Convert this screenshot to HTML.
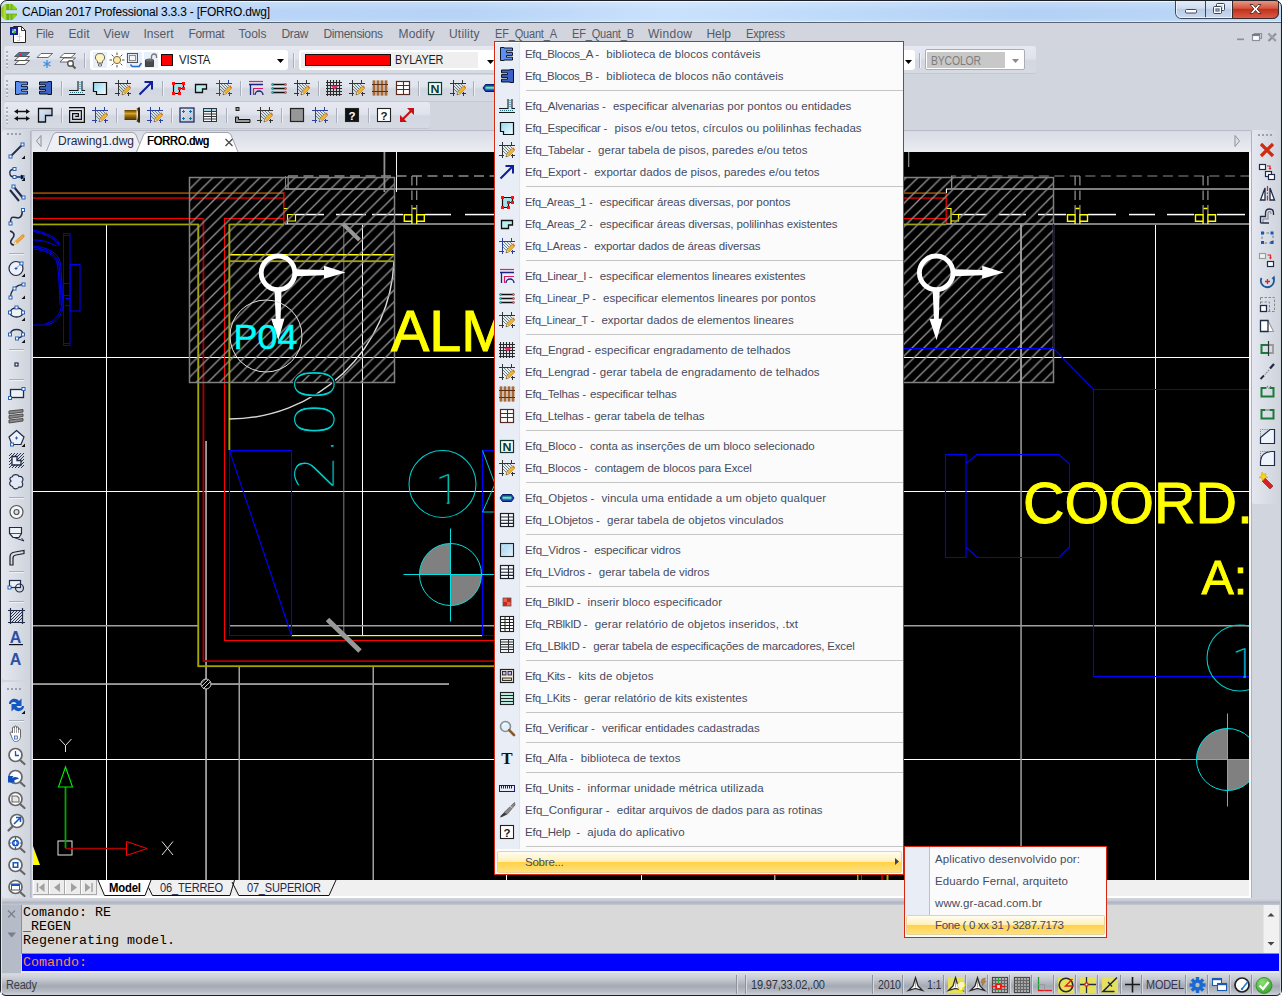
<!DOCTYPE html>
<html><head><meta charset="utf-8"><title>CADian 2017 Professional 3.3.3 - [FORRO.dwg]</title>
<style>
html,body{margin:0;padding:0;}
body{width:1282px;height:996px;overflow:hidden;position:relative;background:#d1d5dd;font-family:"Liberation Sans",sans-serif;font-size:12px;}
.t{position:absolute;white-space:pre;line-height:1;}
.a{position:absolute;}
.tb{position:absolute;border-radius:3px;background:linear-gradient(#e6e9f1,#dfe3ec 45%,#d3d7e1 55%,#d6dae3);box-shadow:0 1px 0 #c4c8d2;}
.sep{position:absolute;width:1px;background:#a9aebb;box-shadow:1px 0 0 #eef0f5;}
.hsep{position:absolute;height:1px;background:#a9aebb;box-shadow:0 1px 0 #eef0f5;}
.grip{position:absolute;width:2px;}
.mi{position:absolute;left:525px;white-space:pre;line-height:1;color:#4a4f5e;font-size:12px;}
.ms{position:absolute;left:526px;width:377px;height:1px;background:#c5c5c5;}
svg{position:absolute;overflow:visible;}
</style></head><body>

<div class="a" style="left:0;top:0;width:1282px;height:22px;background:linear-gradient(100deg,#c6ddf8 0%,#bad5f6 18%,#b6d3f6 36%,#c9e1fc 52%,#bfdbfa 64%,#b3d1f5 80%,#bdd8f8 100%);"></div>
<div class="a" style="left:0;top:0;width:1282px;height:22px;background:linear-gradient(rgba(255,255,255,.28),rgba(255,255,255,0) 45%,rgba(255,255,255,0) 80%,rgba(255,255,255,.15));"></div>
<div class="a" style="left:0;top:21px;width:1282px;height:1px;background:rgba(255,255,255,.45);"></div>
<div class="a" style="left:0;top:22px;width:1282px;height:1px;background:#566474;"></div>
<div class="a" style="left:0;top:1px;width:1282px;height:1px;background:rgba(255,255,255,.7);"></div>
<svg style="left:0px;top:0px;" width="18" height="22" viewBox="0 0 18 22" ><defs><linearGradient id="gapp" x1="0" y1="0" x2="1" y2="0"><stop offset="0" stop-color="#86c41a"/><stop offset=".14" stop-color="#98d226"/><stop offset=".24" stop-color="#c4e640"/><stop offset=".3" stop-color="#8cc81c"/><stop offset=".44" stop-color="#5aa414"/><stop offset=".54" stop-color="#a6da30"/><stop offset=".62" stop-color="#6cb418"/><stop offset=".8" stop-color="#94d41c"/><stop offset="1" stop-color="#7cc418"/></linearGradient></defs><path d="M5,3.900 H12.500 L17,8.400 V9.700 H6 V14 H17 V15.300 L12.500,20 H5 L1.250,16 V8 Z" fill="url(#gapp)"/><path d="M6,9.700 H17 M6,14 H17" stroke="#4e9410" stroke-width="0.800" opacity=".7"/></svg>
<span class="t" id="title" style="left:22px;top:5.8px;font-size:12.5px;color:#000;font-weight:normal;letter-spacing:-0.200px;transform:scaleX(0.958);transform-origin:0 0;">CADian 2017 Professional 3.3.3 - [FORRO.dwg]</span>
<svg style="left:1175px;top:0;" width="106" height="22" viewBox="0 0 106 22"><path d="M0.500,0 V12 Q0.500,18.500 7,18.500 H97 Q103.500,18.500 103.500,12 V0 Z" fill="url(#gbtn)" stroke="#3c4654" stroke-width="1"/><path d="M57.500,0 V18.500 H97 Q103.500,18.500 103.500,12 V0 Z" fill="url(#gred)" stroke="#3c2a2a" stroke-width="1"/><path d="M30.500,0 V18.500" stroke="#3c4654" stroke-width="1"/><path d="M1.500,0 V12 Q1.500,17.500 7,17.500 H56.500 V0" fill="none" stroke="#f4f8fd" stroke-width="1" opacity=".8"/><rect x="10.500" y="9.500" width="11" height="3.500" rx="1" fill="#fff" stroke="#3c4654" stroke-width="1"/><rect x="41.500" y="3.500" width="8" height="7" rx="1" fill="none" stroke="#3c4654" stroke-width="1"/><rect x="42.500" y="4.500" width="6" height="5" fill="none" stroke="#fff" stroke-width="1"/><rect x="38.500" y="6.500" width="8" height="7" rx="1" fill="#cfdcf0" stroke="#3c4654" stroke-width="1"/><rect x="39.500" y="7.500" width="6" height="5" fill="none" stroke="#fff" stroke-width="1"/><rect x="41" y="9" width="3" height="2" fill="#cfdcf0" stroke="#3c4654" stroke-width="0.8"/><path d="M75,4.500 L78,4.500 L80.500,7.500 L83,4.500 L86,4.500 L82.200,9 L86,13.500 L83,13.500 L80.500,10.500 L78,13.500 L75,13.500 L78.800,9 Z" fill="#fff" stroke="#4a2a2a" stroke-width="0.9"/></svg>
<div class="a" style="left:0;top:23px;width:1282px;height:22px;background:#d2d5dd;"></div>
<svg style="left:9px;top:25px;" width="18" height="19" viewBox="0 0 18 19" ><path d="M4.500,1.500 H12.500 L16.500,5.500 V17.500 H4.500 Z" fill="#fff" stroke="#222" stroke-width="1"/><path d="M12.500,1.500 V5.500 H16.500" fill="none" stroke="#222" stroke-width="0.900"/><rect x="1" y="2" width="8" height="8" fill="#1a1a9a"/><path d="M3,4 h4 v4 h-4 z" fill="#3aa0a0"/><path d="M3,7 h2 M6,4 v2" stroke="#fff" stroke-width="1"/><rect x="4.500" y="7" width="1.500" height="1.500" fill="#20c020"/><path d="M8,11.500 h5 M10.500,8 v8 M8,15.500 h3" stroke="#c8c8c8" stroke-width="0.800"/></svg>
<span class="t" id="m0" style="left:35.5px;top:28px;font-size:12px;color:#555a68;font-weight:normal;letter-spacing:-0.201px;transform:scaleX(0.9603);transform-origin:0 0;">File</span>
<span class="t" id="m1" style="left:68.5px;top:28px;font-size:12px;color:#555a68;font-weight:normal;letter-spacing:0.107px;">Edit</span>
<span class="t" id="m2" style="left:103.5px;top:28px;font-size:12px;color:#555a68;font-weight:normal;letter-spacing:0.065px;">View</span>
<span class="t" id="m3" style="left:143.5px;top:28px;font-size:12px;color:#555a68;font-weight:normal;letter-spacing:-0.004px;">Insert</span>
<span class="t" id="m4" style="left:188.5px;top:28px;font-size:12px;color:#555a68;font-weight:normal;letter-spacing:-0.402px;">Format</span>
<span class="t" id="m5" style="left:238.5px;top:28px;font-size:12px;color:#555a68;font-weight:normal;letter-spacing:-0.005px;">Tools</span>
<span class="t" id="m6" style="left:281.5px;top:28px;font-size:12px;color:#555a68;font-weight:normal;letter-spacing:-0.337px;">Draw</span>
<span class="t" id="m7" style="left:323.5px;top:28px;font-size:12px;color:#555a68;font-weight:normal;letter-spacing:-0.356px;">Dimensions</span>
<span class="t" id="m8" style="left:398.5px;top:28px;font-size:12px;color:#555a68;font-weight:normal;letter-spacing:0.129px;">Modify</span>
<span class="t" id="m9" style="left:449.0px;top:28px;font-size:12px;color:#555a68;font-weight:normal;letter-spacing:0.194px;">Utility</span>
<span class="t" id="m10" style="left:494.5px;top:28px;font-size:12px;color:#555a68;font-weight:normal;letter-spacing:-0.202px;transform:scaleX(0.9175);transform-origin:0 0;">EF_Quant_A</span>
<span class="t" id="m11" style="left:571.5px;top:28px;font-size:12px;color:#555a68;font-weight:normal;letter-spacing:-0.202px;transform:scaleX(0.9175);transform-origin:0 0;">EF_Quant_B</span>
<span class="t" id="m12" style="left:648.0px;top:28px;font-size:12px;color:#555a68;font-weight:normal;letter-spacing:0.262px;">Window</span>
<span class="t" id="m13" style="left:706.5px;top:28px;font-size:12px;color:#555a68;font-weight:normal;letter-spacing:-0.062px;">Help</span>
<span class="t" id="m14" style="left:745.5px;top:28px;font-size:12px;color:#555a68;font-weight:normal;letter-spacing:-0.199px;transform:scaleX(0.9251);transform-origin:0 0;">Express</span>
<svg style="left:1232px;top:24px;" width="50" height="24" viewBox="0 0 50 24" ><path d="M5,15.500 H12" stroke="#8a909c" stroke-width="2"/><path d="M5,16.800 H12" stroke="#fff" stroke-width="0.600" opacity=".7"/><rect x="20.500" y="11.500" width="7" height="5" fill="#fff" stroke="#8a909c" stroke-width="1.2"/><path d="M22.500,11.500 V9.500 H29.500 V14.500 H27.500" fill="none" stroke="#8a909c" stroke-width="1.200"/><path d="M20,10.800 H28" stroke="#6a707c" stroke-width="1.400"/><path d="M36.500,9.500 L44,17 M44,9.500 L36.500,17" stroke="#8a909c" stroke-width="2.200"/><path d="M37.300,9.800 L44.800,17.300" stroke="#fff" stroke-width="0.600" opacity=".6"/></svg>
<div class="tb" style="left:4px;top:46px;width:1032px;height:27px;"></div>
<div class="tb" style="left:4px;top:75px;width:640px;height:26px;"></div>
<div class="tb" style="left:4px;top:102px;width:426px;height:26px;"></div>
<div class="grip" style="left:6px;top:51px;height:17px;background:repeating-linear-gradient(#a9aebb 0,#a9aebb 2px,#eef0f5 2px,#eef0f5 3px,transparent 3px,transparent 4px);"></div>
<div class="grip" style="left:6px;top:80px;height:17px;background:repeating-linear-gradient(#a9aebb 0,#a9aebb 2px,#eef0f5 2px,#eef0f5 3px,transparent 3px,transparent 4px);"></div>
<div class="grip" style="left:6px;top:107px;height:17px;background:repeating-linear-gradient(#a9aebb 0,#a9aebb 2px,#eef0f5 2px,#eef0f5 3px,transparent 3px,transparent 4px);"></div>
<svg width="0" height="0" style="left:0;top:0"><defs><linearGradient id="gcy" x1="0" y1="0" x2="1" y2="1"><stop offset="0" stop-color="#8fd8f2"/><stop offset="1" stop-color="#f4fcff"/></linearGradient><linearGradient id="gbl" x1="0" y1="0" x2="1" y2="1"><stop offset="0" stop-color="#dfe9f6"/><stop offset="1" stop-color="#a9c0de"/></linearGradient><linearGradient id="ggold" x1="0" y1="0" x2="0" y2="1"><stop offset="0" stop-color="#5a3c00"/><stop offset=".35" stop-color="#d8a520"/><stop offset=".6" stop-color="#9a6c08"/><stop offset="1" stop-color="#4a3000"/></linearGradient><linearGradient id="gcap" x1="0" y1="0" x2="0" y2="1"><stop offset="0" stop-color="#0b6a6a"/><stop offset=".45" stop-color="#7ff0ee"/><stop offset="1" stop-color="#0a5a60"/></linearGradient><linearGradient id="gsq" x1="0" y1="0" x2="1" y2="1"><stop offset="0" stop-color="#9fd0ee"/><stop offset="1" stop-color="#e6f4fc"/></linearGradient><linearGradient id="ggr" x1="0" y1="0" x2="1" y2="1"><stop offset="0" stop-color="#e8ecf2"/><stop offset="1" stop-color="#b8c0cc"/></linearGradient><radialGradient id="gok" cx=".4" cy=".3" r=".8"><stop offset="0" stop-color="#8fe07a"/><stop offset="1" stop-color="#2f9a28"/></radialGradient><linearGradient id="gred" x1="0" y1="0" x2="0" y2="1"><stop offset="0" stop-color="#e9a090"/><stop offset=".45" stop-color="#d4553f"/><stop offset=".5" stop-color="#c2301a"/><stop offset="1" stop-color="#d9604a"/></linearGradient><linearGradient id="gbtn" x1="0" y1="0" x2="0" y2="1"><stop offset="0" stop-color="#e6eefa"/><stop offset=".45" stop-color="#cfdcf0"/><stop offset=".5" stop-color="#b9cbe6"/><stop offset="1" stop-color="#cbdaf0"/></linearGradient></defs></svg><svg style="left:14px;top:51px;" width="16" height="16" viewBox="0 0 16 16" ><path d="M5,1.500 H15.500 L11,5.500 H0.500 Z" fill="#3f78b8" stroke="#4a4a4a" stroke-width="0.8"/><rect x="5" y="3" width="3" height="2.500" fill="#ff2020"/><path d="M5,5.500 H15.500 L11,9.500 H0.500 Z" fill="#fff" stroke="#4a4a4a" stroke-width="0.900"/><path d="M5,9.500 H15.500 L11,13.500 H0.500 Z" fill="#fff" stroke="#4a4a4a" stroke-width="0.900"/></svg><svg style="left:37px;top:52px;" width="16" height="16" viewBox="0 0 16 16" ><path d="M4,1.500 H15.500 L11,5.500 H0 Z" fill="#fff" stroke="#5a5a5a" stroke-width="0.900"/><path d="M10,8 V16 M6.500,10 L13.500,14 M13.500,10 L6.500,14" stroke="#3f8fe0" stroke-width="1.300"/></svg><svg style="left:60px;top:52px;" width="16" height="16" viewBox="0 0 16 16" ><path d="M4,1.500 H15.500 L11,5.500 H0 Z" fill="#fff" stroke="#5a5a5a" stroke-width="0.900"/><path d="M4,6 H15.500 L11,10 H0 Z" fill="#fff" stroke="#5a5a5a" stroke-width="0.900"/><circle cx="10.500" cy="11.500" r="2.800" fill="#fff" stroke="#555" stroke-width="1.400"/><path d="M12.500,13.500 L15.500,16.500" stroke="#555" stroke-width="1.800"/></svg><div class="sep" style="left:84px;top:53px;height:15px;"></div><div class="a" style="left:90px;top:50px;width:198px;height:20px;background:#fff;border-radius:3px;"></div><svg style="left:92px;top:52px;" width="16" height="16" viewBox="0 0 16 16" ><rect x="1" y="0" width="14" height="16" fill="#e8f0fb"/><path d="M8,1.500 A4,4 0 0 1 10.500,9 V11 H5.500 V9 A4,4 0 0 1 8,1.500 Z" fill="#fdf3c0" stroke="#5a5a4a" stroke-width="0.900"/><path d="M6.500,12 H9.500 V14 H6.500 Z" fill="#fff" stroke="#555" stroke-width="0.800"/></svg><svg style="left:108.5px;top:52px;" width="16" height="16" viewBox="0 0 16 16" ><circle cx="8" cy="8" r="3.600" fill="#fbe9a8" stroke="#6a5a2a" stroke-width="0.900"/><path d="M8,0.500 V3 M8,13 V15.500 M0.500,8 H3 M13,8 H15.500 M2.700,2.700 L4.500,4.500 M11.500,11.500 L13.300,13.300 M2.700,13.300 L4.500,11.500 M11.500,4.500 L13.300,2.700" stroke="#3a3a3a" stroke-width="0.900"/></svg><svg style="left:125.5px;top:52px;" width="16" height="16" viewBox="0 0 16 16" ><rect x="0" y="0" width="16" height="16" fill="#e8f0fb"/><rect x="1.500" y="1.500" width="10" height="9" fill="#dfe6ee" stroke="#555" stroke-width="1"/><rect x="3.500" y="3.500" width="6" height="5" fill="#f4f6f8" stroke="#777" stroke-width="0.800"/><path d="M6,14.500 H13 L15.500,11 M4.500,12.500 L6,14.500" fill="none" stroke="#2a6ac8" stroke-width="1.500"/></svg><svg style="left:142.5px;top:52px;" width="16" height="16" viewBox="0 0 16 16" ><rect x="1" y="0" width="14" height="16" fill="#e8f0fb"/><path d="M8.500,8 V4.500 A2.500,2.500 0 0 1 13.500,4.500 V6" fill="none" stroke="#777" stroke-width="1.300"/><path d="M2.500,8 H10.500 V14.500 H2.500 Z" fill="#4a4a4a" stroke="#2a2a2a" stroke-width="0.800"/><ellipse cx="6.500" cy="8" rx="4" ry="1.500" fill="#6a6a6a"/></svg><div class="a" style="left:161px;top:54px;width:12px;height:12px;background:#ff0000;border:1px solid #111;box-sizing:border-box;"></div><svg style="left:277px;top:59px;" width="7" height="4" viewBox="0 0 7 4" ><path d="M0,0 H7 L3.500,4 Z" fill="#000"/></svg><div class="sep" style="left:293px;top:53px;height:15px;"></div><div class="a" style="left:299px;top:50px;width:200px;height:20px;background:#fff;border-radius:3px;"></div><div class="a" style="left:301px;top:52px;width:177px;height:16px;background:#efefef;"></div><div class="a" style="left:305px;top:54px;width:86px;height:12px;background:#ff0000;border:1px solid #111;box-sizing:border-box;"></div><svg style="left:486.5px;top:59.5px;" width="7" height="4" viewBox="0 0 7 4" ><path d="M0,0 H7 L3.500,4 Z" fill="#000"/></svg><div class="a" style="left:700px;top:50px;width:215px;height:20px;background:#fff;border-radius:3px;"></div><svg style="left:904.5px;top:59.5px;" width="7" height="4" viewBox="0 0 7 4" ><path d="M0,0 H7 L3.500,4 Z" fill="#000"/></svg><div class="sep" style="left:919px;top:53px;height:15px;"></div><div class="a" style="left:925px;top:49px;width:100px;height:21px;background:#fff;border:1px solid #a8adb8;box-sizing:border-box;border-radius:2px;"></div><div class="a" style="left:927px;top:52px;width:78px;height:16px;background:#c8c8c8;"></div><svg style="left:1012px;top:59px;" width="7" height="4" viewBox="0 0 7 4" ><path d="M0,0 H7 L3.500,4 Z" fill="#8a8a8a"/></svg>
<svg style="left:14px;top:80px;" width="16" height="16" viewBox="0 0 16 16" ><path d="M1.5,1.500 H5 V2 H13.5 V4.800 H7.500 V6.600 H13.5 V9.400 H7.500 V11.200 H13.5 V14 H5 V14.500 H1.5 Z" fill="#5b8ff0" stroke="#101828" stroke-width="1"/></svg><svg style="left:36.5px;top:80px;" width="16" height="16" viewBox="0 0 16 16" ><path d="M14.5,1.500 H11 V2 H2.5 V4.800 H8.500 V6.600 H2.5 V9.400 H8.500 V11.200 H2.5 V14 H11 V14.500 H14.5 Z" fill="#3a63c8" stroke="#0a1020" stroke-width="1"/></svg><div class="sep" style="left:61px;top:81px;height:15px;"></div><svg style="left:69px;top:80px;" width="16" height="16" viewBox="0 0 16 16" ><rect x="9" y="1" width="4" height="9" fill="#cdeff5"/><rect x="0" y="10" width="16" height="4" fill="#cdeff5"/><path d="M0,10.5 H9 V1 M13,1 V10.5 H16 M0,14.5 H16" fill="none" stroke="#1a1a1a" stroke-width="1.1"/><path d="M1,12.5 H15 M11,2 V10" stroke="#1f6a86" stroke-width="1" stroke-dasharray="1 1" fill="none"/></svg><svg style="left:92px;top:80px;" width="16" height="16" viewBox="0 0 16 16" ><path d="M1.5,2.5 H14.5 V14.5 H4.5 V11.5 H1.5 Z" fill="url(#gcy)" stroke="#101010" stroke-width="1.2"/></svg><svg style="left:115px;top:80px;" width="16" height="16" viewBox="0 0 16 16" ><path d="M3.5,0 V16 M12.5,0 V3 M0,3.5 H16 M0,13.5 H5 M12,13.5 H16 M13.500,12 V16" stroke="#333" stroke-width="1" fill="none"/><path d="M4,6 l7,7 M4,9 l4,4 M5,4 l6,6 M8,4 l4,4 M11,4 l2,2" stroke="#5b7a70" stroke-width="0.9" fill="none"/><path d="M7,14.8 L8,11.5 L13.2,6.3 L15.4,8.5 L10.2,13.7 Z" fill="#f3b32a" stroke="#9a6a10" stroke-width="0.5"/><path d="M13.2,6.3 L14.2,5.3 L16,7.5 L15.4,8.5 Z" fill="#c8732a"/><path d="M7,14.8 L8,11.5 L10.2,13.7 Z" fill="#f1e3c8" stroke="#7a6a50" stroke-width="0.4"/><path d="M7,14.8 l0.5,-1.4 l0.9,0.9 Z" fill="#333"/></svg><svg style="left:138px;top:80px;" width="16" height="16" viewBox="0 0 16 16" ><path d="M1.5,14.5 L13.5,2.5 M6.5,2 H14 V9.5" fill="none" stroke="#0f1f9a" stroke-width="2"/></svg><div class="sep" style="left:161.5px;top:81px;height:15px;"></div><svg style="left:170px;top:80px;" width="16" height="16" viewBox="0 0 16 16" ><path d="M3.500,3.5 H13.5 V8.5 H9.5 V13.5 H3.5 Z" fill="#9fe3ea" stroke="#101010" stroke-width="1.2"/><rect x="2" y="2" width="3" height="3" fill="#ff1010"/><rect x="12" y="2" width="3" height="3" fill="#ff1010"/><rect x="12" y="7" width="3" height="3" fill="#ff1010"/><rect x="8" y="7" width="3" height="3" fill="#ff1010"/><rect x="8" y="12" width="3" height="3" fill="#ff1010"/><rect x="2" y="12" width="3" height="3" fill="#ff1010"/></svg><svg style="left:193px;top:80px;" width="16" height="16" viewBox="0 0 16 16" ><path d="M2.5,4.5 H13.5 V9 H9.5 V12.5 H2.5 Z" fill="#b9eef0" stroke="#101010" stroke-width="1.3"/></svg><svg style="left:216px;top:80px;" width="16" height="16" viewBox="0 0 16 16" ><path d="M3.5,0 V16 M12.5,0 V3 M0,3.5 H16 M0,13.5 H5 M12,13.5 H16 M13.500,12 V16" stroke="#2a3fa0" stroke-width="1" fill="none"/><path d="M4,6 l7,7 M4,9 l4,4 M5,4 l6,6 M8,4 l4,4 M11,4 l2,2" stroke="#5b7a70" stroke-width="0.9" fill="none"/><path d="M7,14.8 L8,11.5 L13.2,6.3 L15.4,8.5 L10.2,13.7 Z" fill="#f3b32a" stroke="#9a6a10" stroke-width="0.5"/><path d="M13.2,6.3 L14.2,5.3 L16,7.5 L15.4,8.5 Z" fill="#c8732a"/><path d="M7,14.8 L8,11.5 L10.2,13.7 Z" fill="#f1e3c8" stroke="#7a6a50" stroke-width="0.4"/><path d="M7,14.8 l0.5,-1.4 l0.9,0.9 Z" fill="#333"/></svg><div class="sep" style="left:239.5px;top:81px;height:15px;"></div><svg style="left:248px;top:80px;" width="16" height="16" viewBox="0 0 16 16" ><path d="M1,1.5 H15" stroke="#e8205a" stroke-width="1.2"/><path d="M1,4.5 H15 M2.5,4.5 V15" stroke="#1a237e" stroke-width="1.3" fill="none"/><path d="M5,8.5 H15 M5.5,8.5 V15" stroke="#d81b60" stroke-width="1.2" fill="none"/><path d="M7,15 A4,4 0 0 1 15,15" fill="none" stroke="#1a237e" stroke-width="1.3"/></svg><svg style="left:271px;top:80px;" width="16" height="16" viewBox="0 0 16 16" ><path d="M2,4.5 H14 M2,8.5 H14 M2,12.5 H14" stroke="#101010" stroke-width="1.3"/><circle cx="1.5" cy="4.5" r="1" fill="#39c0c0" stroke="#c02020" stroke-width="0.6"/><circle cx="1.5" cy="8.5" r="1" fill="#39c0c0" stroke="#c02020" stroke-width="0.6"/><circle cx="1.5" cy="12.5" r="1" fill="#39c0c0" stroke="#c02020" stroke-width="0.6"/><circle cx="14.5" cy="4.5" r="1" fill="#39c0c0" stroke="#c02020" stroke-width="0.6"/><circle cx="14.5" cy="8.5" r="1" fill="#39c0c0" stroke="#c02020" stroke-width="0.6"/><circle cx="14.5" cy="12.5" r="1" fill="#39c0c0" stroke="#c02020" stroke-width="0.6"/></svg><svg style="left:294px;top:80px;" width="16" height="16" viewBox="0 0 16 16" ><path d="M3.5,0 V16 M12.5,0 V3 M0,3.5 H16 M0,13.5 H5 M12,13.5 H16 M13.500,12 V16" stroke="#333" stroke-width="1" fill="none"/><path d="M4,6 l7,7 M4,9 l4,4 M5,4 l6,6 M8,4 l4,4 M11,4 l2,2" stroke="#5b7a70" stroke-width="0.9" fill="none"/><path d="M7,14.8 L8,11.5 L13.2,6.3 L15.4,8.5 L10.2,13.7 Z" fill="#f3b32a" stroke="#9a6a10" stroke-width="0.5"/><path d="M13.2,6.3 L14.2,5.3 L16,7.5 L15.4,8.5 Z" fill="#c8732a"/><path d="M7,14.8 L8,11.5 L10.2,13.7 Z" fill="#f1e3c8" stroke="#7a6a50" stroke-width="0.4"/><path d="M7,14.8 l0.5,-1.4 l0.9,0.9 Z" fill="#333"/></svg><div class="sep" style="left:318px;top:81px;height:15px;"></div><svg style="left:326px;top:80px;" width="16" height="16" viewBox="0 0 16 16" ><path d="M1.500,0 V16 M4.500,0 V16 M7.500,0 V16 M10.500,0 V16 M13.500,0 V16 M0,2.500 H16 M0,5.500 H16 M0,8.500 H16 M0,11.500 H16 M0,14.500 H16" stroke="#2a2a2a" stroke-width="1.100" fill="none"/><path d="M4.800,5.800 H12.600 L8.700,9.600 Z" fill="#e8306a"/></svg><svg style="left:349px;top:80px;" width="16" height="16" viewBox="0 0 16 16" ><path d="M3.5,0 V16 M12.5,0 V3 M0,3.5 H16 M0,13.5 H5 M12,13.5 H16 M13.500,12 V16" stroke="#333" stroke-width="1" fill="none"/><path d="M4,6 l7,7 M4,9 l4,4 M5,4 l6,6 M8,4 l4,4 M11,4 l2,2" stroke="#5b7a70" stroke-width="0.9" fill="none"/><path d="M7,14.8 L8,11.5 L13.2,6.3 L15.4,8.5 L10.2,13.7 Z" fill="#f3b32a" stroke="#9a6a10" stroke-width="0.5"/><path d="M13.2,6.3 L14.2,5.3 L16,7.5 L15.4,8.5 Z" fill="#c8732a"/><path d="M7,14.8 L8,11.5 L10.2,13.7 Z" fill="#f1e3c8" stroke="#7a6a50" stroke-width="0.4"/><path d="M7,14.8 l0.5,-1.4 l0.9,0.9 Z" fill="#333"/></svg><svg style="left:372px;top:80px;" width="16" height="16" viewBox="0 0 16 16" ><path d="M2,0.500 V15.500 M6,0.500 V15.500 M10,0.500 V15.500 M14,0.500 V15.500" stroke="#9a5a28" stroke-width="2.700"/><path d="M2,0.500 V15.500 M6,0.500 V15.500 M10,0.500 V15.500 M14,0.500 V15.500" stroke="#b87a40" stroke-width="1"/><path d="M0,4.5 H16 M0,11.5 H16" stroke="#5a3018" stroke-width="1"/></svg><svg style="left:395px;top:80px;" width="16" height="16" viewBox="0 0 16 16" ><rect x="1.500" y="1.5" width="13" height="13" fill="#fff" stroke="#5a2a20" stroke-width="1.2"/><path d="M1.5,5.5 H14.5 M1.5,9.500 H14.5 M8.500,1.5 V14.5" stroke="#5a2a20" stroke-width="1.1"/></svg><div class="sep" style="left:418px;top:81px;height:15px;"></div><svg style="left:427px;top:80px;" width="16" height="16" viewBox="0 0 16 16" ><rect x="1.5" y="2.5" width="13" height="12" fill="#f2f8f4" stroke="#0c3a30" stroke-width="1.2"/><text x="8" y="12.600" font-family="Liberation Sans, sans-serif" font-weight="bold" font-size="11" text-anchor="middle" fill="#0c3a30" textLength="9" lengthAdjust="spacingAndGlyphs">N</text></svg><svg style="left:450px;top:80px;" width="16" height="16" viewBox="0 0 16 16" ><path d="M3.5,0 V16 M12.5,0 V3 M0,3.5 H16 M0,13.5 H5 M12,13.5 H16 M13.500,12 V16" stroke="#333" stroke-width="1" fill="none"/><path d="M4,6 l7,7 M4,9 l4,4 M5,4 l6,6 M8,4 l4,4 M11,4 l2,2" stroke="#5b7a70" stroke-width="0.9" fill="none"/><path d="M7,14.8 L8,11.5 L13.2,6.3 L15.4,8.5 L10.2,13.7 Z" fill="#f3b32a" stroke="#9a6a10" stroke-width="0.5"/><path d="M13.2,6.3 L14.2,5.3 L16,7.5 L15.4,8.5 Z" fill="#c8732a"/><path d="M7,14.8 L8,11.5 L10.2,13.7 Z" fill="#f1e3c8" stroke="#7a6a50" stroke-width="0.4"/><path d="M7,14.8 l0.5,-1.4 l0.9,0.9 Z" fill="#333"/></svg><div class="sep" style="left:473px;top:81px;height:15px;"></div><svg style="left:482px;top:80px;" width="16" height="16" viewBox="0 0 16 16" ><path d="M3.5,4.5 H12.5 L15,8 L12.500,11.5 H3.5 L1,8 Z" fill="#1c3fb0" stroke="#0a1a70" stroke-width="1"/><rect x="3.5" y="6" width="9" height="4" fill="url(#gcap)"/></svg>
<svg style="left:14px;top:107px;" width="16" height="16" viewBox="0 0 16 16" ><path d="M2,4.500 H14 M2,11.5 H14" stroke="#111" stroke-width="1.4"/><path d="M0,4.5 L4,2 V7 Z M16,4.5 L12,2 V7 Z M0,11.5 L4,9 V14 Z M16,11.500 L12,9 V14 Z" fill="#111"/></svg><svg style="left:37px;top:107px;" width="16" height="16" viewBox="0 0 16 16" ><path d="M1.500,1.500 H15 V8.500 H8.500 V15 H1.5 Z" fill="url(#gbl)" stroke="#111" stroke-width="1.3"/></svg><div class="sep" style="left:61px;top:108px;height:15px;"></div><svg style="left:69px;top:107px;" width="16" height="16" viewBox="0 0 16 16" ><path d="M0,0.600 H15.400 V15.400 H0.600 V3.600 H12.400 V12.400 H3.600 V6.600 H9.400 V9.400 H6.200" fill="none" stroke="#111" stroke-width="1.200"/></svg><svg style="left:92px;top:107px;" width="16" height="16" viewBox="0 0 16 16" ><path d="M3.5,0 V16 M12.5,0 V3 M0,3.5 H16 M0,13.5 H5 M12,13.5 H16 M13.500,12 V16" stroke="#2a3fa0" stroke-width="1" fill="none"/><path d="M4,6 l7,7 M4,9 l4,4 M5,4 l6,6 M8,4 l4,4 M11,4 l2,2" stroke="#5b7a70" stroke-width="0.9" fill="none"/><path d="M7,14.8 L8,11.5 L13.2,6.3 L15.4,8.5 L10.2,13.7 Z" fill="#f3b32a" stroke="#9a6a10" stroke-width="0.5"/><path d="M13.2,6.3 L14.2,5.3 L16,7.5 L15.4,8.5 Z" fill="#c8732a"/><path d="M7,14.8 L8,11.5 L10.2,13.7 Z" fill="#f1e3c8" stroke="#7a6a50" stroke-width="0.4"/><path d="M7,14.8 l0.5,-1.4 l0.9,0.9 Z" fill="#333"/></svg><div class="sep" style="left:116px;top:108px;height:15px;"></div><svg style="left:124px;top:107px;" width="16" height="16" viewBox="0 0 16 16" ><rect x="0.500" y="3" width="12" height="10" fill="url(#ggold)"/><path d="M12.500,1.5 Q15.5,8 12.500,14.500 L15.500,15.500 V0.500 Z" fill="url(#ggold)"/><rect x="14" y="0.500" width="2" height="15" fill="#3a2600"/></svg><svg style="left:147px;top:107px;" width="16" height="16" viewBox="0 0 16 16" ><path d="M3.5,0 V16 M12.5,0 V3 M0,3.5 H16 M0,13.5 H5 M12,13.5 H16 M13.500,12 V16" stroke="#2a3fa0" stroke-width="1" fill="none"/><path d="M4,6 l7,7 M4,9 l4,4 M5,4 l6,6 M8,4 l4,4 M11,4 l2,2" stroke="#5b7a70" stroke-width="0.9" fill="none"/><path d="M7,14.8 L8,11.5 L13.2,6.3 L15.4,8.5 L10.2,13.7 Z" fill="#f3b32a" stroke="#9a6a10" stroke-width="0.5"/><path d="M13.2,6.3 L14.2,5.3 L16,7.5 L15.4,8.5 Z" fill="#c8732a"/><path d="M7,14.8 L8,11.5 L10.2,13.7 Z" fill="#f1e3c8" stroke="#7a6a50" stroke-width="0.4"/><path d="M7,14.8 l0.5,-1.4 l0.9,0.9 Z" fill="#333"/></svg><div class="sep" style="left:171px;top:108px;height:15px;"></div><svg style="left:179px;top:107px;" width="16" height="16" viewBox="0 0 16 16" ><rect x="1" y="1" width="14" height="14" fill="url(#ggr)" stroke="#10205a" stroke-width="1.2"/><path d="M3.0,4.5 h3 M4.5,3.0 v3" stroke="#0a70b8" stroke-width="1"/><path d="M3.0,11.5 h3 M4.5,10.0 v3" stroke="#0a70b8" stroke-width="1"/><path d="M10.0,4.5 h3 M11.5,3.0 v3" stroke="#0a70b8" stroke-width="1"/><path d="M10.0,11.5 h3 M11.5,10.0 v3" stroke="#0a70b8" stroke-width="1"/></svg><svg style="left:202px;top:107px;" width="16" height="16" viewBox="0 0 16 16" ><rect x="1.500" y="1.5" width="13" height="13" fill="#f4f8fa" stroke="#333" stroke-width="1"/><rect x="2" y="2" width="12" height="2.500" fill="#9fd8ee"/><path d="M1.5,4.500 H14.5 M1.500,7 H14.5 M1.5,9.500 H14.500 M1.5,12 H14.5 M9.500,1.5 V14.5" stroke="#333" stroke-width="1"/></svg><div class="sep" style="left:226px;top:108px;height:15px;"></div><svg style="left:234px;top:107px;" width="16" height="16" viewBox="0 0 16 16" ><rect x="2" y="0.5" width="3" height="3" fill="#9a9a9a" stroke="#111" stroke-width="0.9"/><path d="M1.500,10 H4.5 V12.500 H16 V15.500 H1.5 Z" fill="#9a9a9a" stroke="#111" stroke-width="1"/></svg><svg style="left:257px;top:107px;" width="16" height="16" viewBox="0 0 16 16" ><path d="M3.5,0 V16 M12.5,0 V3 M0,3.5 H16 M0,13.5 H5 M12,13.5 H16 M13.500,12 V16" stroke="#333" stroke-width="1" fill="none"/><path d="M4,6 l7,7 M4,9 l4,4 M5,4 l6,6 M8,4 l4,4 M11,4 l2,2" stroke="#5b7a70" stroke-width="0.9" fill="none"/><path d="M7,14.8 L8,11.5 L13.2,6.3 L15.4,8.5 L10.2,13.7 Z" fill="#f3b32a" stroke="#9a6a10" stroke-width="0.5"/><path d="M13.2,6.3 L14.2,5.3 L16,7.5 L15.4,8.5 Z" fill="#c8732a"/><path d="M7,14.8 L8,11.5 L10.2,13.7 Z" fill="#f1e3c8" stroke="#7a6a50" stroke-width="0.4"/><path d="M7,14.8 l0.5,-1.4 l0.9,0.9 Z" fill="#333"/></svg><div class="sep" style="left:281px;top:108px;height:15px;"></div><svg style="left:289px;top:107px;" width="16" height="16" viewBox="0 0 16 16" ><rect x="1.500" y="1.5" width="13" height="13" fill="#979797" stroke="#222" stroke-width="1.2"/></svg><svg style="left:312px;top:107px;" width="16" height="16" viewBox="0 0 16 16" ><path d="M3.5,0 V16 M12.5,0 V3 M0,3.5 H16 M0,13.5 H5 M12,13.5 H16 M13.500,12 V16" stroke="#2a3fa0" stroke-width="1" fill="none"/><path d="M4,6 l7,7 M4,9 l4,4 M5,4 l6,6 M8,4 l4,4 M11,4 l2,2" stroke="#5b7a70" stroke-width="0.9" fill="none"/><path d="M7,14.8 L8,11.5 L13.2,6.3 L15.4,8.5 L10.2,13.7 Z" fill="#f3b32a" stroke="#9a6a10" stroke-width="0.5"/><path d="M13.2,6.3 L14.2,5.3 L16,7.5 L15.4,8.5 Z" fill="#c8732a"/><path d="M7,14.8 L8,11.5 L10.2,13.7 Z" fill="#f1e3c8" stroke="#7a6a50" stroke-width="0.4"/><path d="M7,14.8 l0.5,-1.4 l0.9,0.9 Z" fill="#333"/></svg><div class="sep" style="left:336px;top:108px;height:15px;"></div><svg style="left:344px;top:107px;" width="16" height="16" viewBox="0 0 16 16" ><rect x="1.500" y="1.5" width="13" height="13" fill="#111" stroke="#222" stroke-width="1.1"/><text x="8" y="12.500" font-family="Liberation Sans, sans-serif" font-weight="bold" font-size="11.5" text-anchor="middle" fill="#fff">?</text></svg><div class="sep" style="left:368px;top:108px;height:15px;"></div><svg style="left:376px;top:107px;" width="16" height="16" viewBox="0 0 16 16" ><rect x="1.500" y="1.5" width="13" height="13" fill="#fff" stroke="#222" stroke-width="1.1"/><text x="8" y="12.500" font-family="Liberation Sans, sans-serif" font-weight="bold" font-size="11.5" text-anchor="middle" fill="#222">?</text></svg><svg style="left:399px;top:107px;" width="16" height="16" viewBox="0 0 16 16" ><path d="M2.5,13.500 L13.500,2.5" stroke="#c81010" stroke-width="2.2"/><path d="M8,1 H15 V8 Z M1,8 V15 H8 Z" fill="#c81010"/></svg>
<div class="a" style="left:2px;top:130px;width:28px;height:550px;background:linear-gradient(90deg,#e4e7ef,#d9dde6 50%,#cfd3dc);border-radius:3px;"></div>
<div class="a" style="left:2px;top:682px;width:28px;height:216px;background:linear-gradient(90deg,#e4e7ef,#d9dde6 50%,#cfd3dc);border-radius:3px;"></div>
<div class="a" style="left:1252px;top:130px;width:29px;height:374px;background:linear-gradient(90deg,#e4e7ef,#d9dde6 50%,#cfd3dc);border-radius:3px;"></div>
<svg style="left:6px;top:140px;" width="20" height="20" viewBox="0 0 20 20" ><path d="M5,16 L16,5" stroke="#1f2b47" stroke-width="1.800"/><rect x="3.0" y="15.0" width="3" height="3" fill="#fff" stroke="#2a62b8" stroke-width="1"/><rect x="15.0" y="3.0" width="3" height="3" fill="#fff" stroke="#2a62b8" stroke-width="1"/><path d="M19,15.500 V19 H15.500 Z" fill="#111"/></svg><svg style="left:6px;top:162px;" width="20" height="20" viewBox="0 0 20 20" ><path d="M7.500,7 C2,8 3,15 8,15 H16" fill="none" stroke="#1f2b47" stroke-width="1.300"/><rect x="7.0" y="5.5" width="3" height="3" fill="#fff" stroke="#2a62b8" stroke-width="1"/><rect x="7.0" y="13.5" width="3" height="3" fill="#fff" stroke="#2a62b8" stroke-width="1"/><rect x="15.0" y="13.5" width="3" height="3" fill="#fff" stroke="#2a62b8" stroke-width="1"/><path d="M18,15 l-3,-2.500 v5 z" fill="#111"/><path d="M19,15.500 V19 H15.500 Z" fill="#111"/></svg><svg style="left:6px;top:184px;" width="20" height="20" viewBox="0 0 20 20" ><path d="M4,6 L13,17 M8,3 L17,14" stroke="#1f2b47" stroke-width="2"/><rect x="6.0" y="1.0" width="3" height="3" fill="#fff" stroke="#2a62b8" stroke-width="1"/><rect x="16.0" y="12.0" width="3" height="3" fill="#fff" stroke="#2a62b8" stroke-width="1"/></svg><svg style="left:6px;top:206px;" width="20" height="20" viewBox="0 0 20 20" ><path d="M4.500,17 C4.500,8 9,12 12,12 C16,12 16,8 16.500,4.500" fill="none" stroke="#1f2b47" stroke-width="1.500"/><rect x="3.0" y="16.0" width="3" height="3" fill="#fff" stroke="#2a62b8" stroke-width="1"/><rect x="15.5" y="2.5" width="3" height="3" fill="#fff" stroke="#2a62b8" stroke-width="1"/></svg><svg style="left:6px;top:228px;" width="20" height="20" viewBox="0 0 20 20" ><path d="M4,3 C10,5 8,9 6,11 C3,15 6,17 8,17" fill="none" stroke="#1f2b47" stroke-width="1.600"/><path d="M8,16.500 L9,13.500 L16,7 L18,9 L11,15.500 Z" fill="#f2a73a" stroke="#c8801a" stroke-width="0.500"/><path d="M16,7 L17,6 L19,8 L18,9 Z" fill="#e89030"/><path d="M8,16.500 L9,13.500 L11,15.500 Z" fill="#f4e4c8"/></svg><div class="hsep" style="left:9px;top:253px;width:15px;"></div><svg style="left:6px;top:258px;" width="20" height="20" viewBox="0 0 20 20" ><circle cx="10" cy="10.500" r="7" fill="#eef1f8" stroke="#1f2b47" stroke-width="1.200"/><path d="M10,10.500 L15,5.500" stroke="#2a62b8" stroke-width="1" stroke-dasharray="1.500 1"/><path d="M8.500,10.500 h3 M10,9 v3" stroke="#2a62b8" stroke-width="1"/><rect x="14.0" y="4.0" width="3" height="3" fill="#fff" stroke="#2a62b8" stroke-width="1"/><path d="M19,15.500 V19 H15.500 Z" fill="#111"/></svg><svg style="left:6px;top:280px;" width="20" height="20" viewBox="0 0 20 20" ><path d="M4.500,17 C5,10 10,5 17,4.500" fill="none" stroke="#1f2b47" stroke-width="1.300"/><rect x="3.0" y="16.0" width="3" height="3" fill="#fff" stroke="#2a62b8" stroke-width="1"/><rect x="7.0" y="7.0" width="3" height="3" fill="#fff" stroke="#2a62b8" stroke-width="1"/><rect x="16.0" y="3.0" width="3" height="3" fill="#fff" stroke="#2a62b8" stroke-width="1"/><path d="M19,15.500 V19 H15.500 Z" fill="#111"/></svg><svg style="left:6px;top:302px;" width="20" height="20" viewBox="0 0 20 20" ><ellipse cx="10.500" cy="10.500" rx="6.500" ry="4.500" fill="#eef1f8" stroke="#1f2b47" stroke-width="1.300"/><rect x="2.5" y="9.0" width="3" height="3" fill="#fff" stroke="#2a62b8" stroke-width="1"/><rect x="15.5" y="9.0" width="3" height="3" fill="#fff" stroke="#2a62b8" stroke-width="1"/><rect x="9.0" y="4.0" width="3" height="3" fill="#fff" stroke="#2a62b8" stroke-width="1"/><path d="M19,15.500 V19 H15.500 Z" fill="#111"/></svg><svg style="left:6px;top:324px;" width="20" height="20" viewBox="0 0 20 20" ><path d="M4.500,10 C4,4 17,4 17,10 C17,13 13,14 11,14" fill="none" stroke="#1f2b47" stroke-width="1.300"/><rect x="2.5" y="9.0" width="3" height="3" fill="#fff" stroke="#2a62b8" stroke-width="1"/><rect x="15.5" y="9.0" width="3" height="3" fill="#fff" stroke="#2a62b8" stroke-width="1"/><rect x="9.5" y="13.0" width="3" height="3" fill="#fff" stroke="#2a62b8" stroke-width="1"/><path d="M19,15.500 V19 H15.500 Z" fill="#111"/></svg><div class="hsep" style="left:9px;top:349px;width:15px;"></div><svg style="left:6px;top:354px;" width="20" height="20" viewBox="0 0 20 20" ><rect x="9" y="9" width="3" height="3" fill="#fff" stroke="#1f2b47" stroke-width="1.200"/></svg><div class="hsep" style="left:9px;top:379px;width:15px;"></div><svg style="left:6px;top:383px;" width="20" height="20" viewBox="0 0 20 20" ><rect x="4.500" y="6.500" width="13" height="8" fill="#eef1f8" stroke="#1f2b47" stroke-width="1.300"/><rect x="2.5" y="13.5" width="3" height="3" fill="#fff" stroke="#2a62b8" stroke-width="1"/><rect x="16.0" y="4.5" width="3" height="3" fill="#fff" stroke="#2a62b8" stroke-width="1"/></svg><svg style="left:6px;top:406px;" width="20" height="20" viewBox="0 0 20 20" ><path d="M3,5 L17,3.500 V6 L3,8 Z M3,9.500 L17,8 V10.500 L3,12.500 Z M3,14 L17,12.500 V15 L3,17 Z" fill="#8a8a8a" stroke="#444" stroke-width="0.900"/></svg><svg style="left:6px;top:428px;" width="20" height="20" viewBox="0 0 20 20" ><path d="M10.500,2.500 L18,9 L15,16.500 H6 L3,9 Z" fill="#eef1f8" stroke="#1f2b47" stroke-width="1.200"/><path d="M9,10 h3 M10.500,8.500 v3" stroke="#2a62b8" stroke-width="1"/><rect x="4.5" y="15.0" width="3" height="3" fill="#fff" stroke="#2a62b8" stroke-width="1"/><path d="M19,15.500 V19 H15.500 Z" fill="#111"/></svg><svg style="left:6px;top:450px;" width="20" height="20" viewBox="0 0 20 20" ><path d="M3,6 l3,-3 M3,9 l6,-6 M3,12 l9,-9 M3,15 l12,-12 M3,18 l15,-15 M6,18 l12,-12 M9,18 l9,-9 M12,18 l6,-6 M15,18 l3,-3" stroke="#2a3550" stroke-width="1"/><path d="M6,6.500 H11 V10.500 H15 V15 H6 Z" fill="#eef1f8" stroke="#1f2b47" stroke-width="1.300"/></svg><svg style="left:6px;top:472px;" width="20" height="20" viewBox="0 0 20 20" ><path d="M6,5 C7,2 12,2 13,4.500 C17,4 18,8 16,10 C18,13 16,16 13,15 C11,18 7,17 6.500,14.500 C3,14 3,10 5,9 C3,7 4,5 6,5 Z" fill="#e4e9f4" stroke="#1f2b47" stroke-width="1.200"/></svg><div class="hsep" style="left:9px;top:497px;width:15px;"></div><svg style="left:6px;top:502px;" width="20" height="20" viewBox="0 0 20 20" ><circle cx="10.500" cy="10" r="6.500" fill="#f4f6fa" stroke="#555" stroke-width="1.200"/><circle cx="10.500" cy="10" r="2.500" fill="#d8dce6" stroke="#555" stroke-width="1.200"/></svg><svg style="left:6px;top:524px;" width="20" height="20" viewBox="0 0 20 20" ><path d="M3.500,3.500 H15.500 V9.500 L13,13.500 H7 L3.500,9.500 Z" fill="#eef1f8" stroke="#1f2b47" stroke-width="1.200"/><path d="M3.500,9.500 H15.500" stroke="#1f2b47" stroke-width="0.800"/><path d="M8,13.500 L18,17 L15.500,14" fill="none" stroke="#1f2b47" stroke-width="1"/></svg><svg style="left:6px;top:547px;" width="20" height="20" viewBox="0 0 20 20" ><path d="M4,18 V10 Q4,5.500 9,5 L18,3.500 V6.500 L10,8 Q7,8.500 7,11 V18 Z" fill="#d5dbee" stroke="#222" stroke-width="1.200"/></svg><div class="hsep" style="left:9px;top:571px;width:15px;"></div><svg style="left:6px;top:576px;" width="20" height="20" viewBox="0 0 20 20" ><rect x="3.500" y="4.500" width="11" height="7" fill="#eef1f8" stroke="#1f2b47" stroke-width="1.200"/><circle cx="13.500" cy="12" r="4" fill="none" stroke="#1f2b47" stroke-width="1.200"/><rect x="2.0" y="10.0" width="3" height="3" fill="#fff" stroke="#2a62b8" stroke-width="1"/></svg><div class="hsep" style="left:9px;top:601px;width:15px;"></div><svg style="left:6px;top:606px;" width="20" height="20" viewBox="0 0 20 20" ><path d="M5,8 l3,-3 M5,11 l6,-6 M5,14 l9,-9 M6,16 l10,-10 M9,16 l7,-7 M12,16 l4,-4" stroke="#2a3550" stroke-width="1"/><path d="M4.500,2 V18 M16.500,2 V18 M2,4.500 H19 M2,16.500 H19" stroke="#1f2b47" stroke-width="1.200"/></svg><svg style="left:6px;top:628px;" width="20" height="20" viewBox="0 0 20 20" ><text x="9.500" y="14.700" font-family="Liberation Sans, sans-serif" font-weight="bold" font-size="16" text-anchor="middle" fill="#2b4fa2">A</text><path d="M3,16.600 H17" stroke="#111" stroke-width="1.200"/></svg><svg style="left:6px;top:650px;" width="20" height="20" viewBox="0 0 20 20" ><text x="9.500" y="14.700" font-family="Liberation Sans, sans-serif" font-weight="bold" font-size="16" text-anchor="middle" fill="#2b4fa2">A</text></svg><svg style="left:6px;top:695px;" width="20" height="20" viewBox="0 0 20 20" ><path d="M3,9 C3,4 10,2 13,6 L15.500,3.500 V11 H8 L10.500,8.500 C8,6 5.500,7 5,9 Z" fill="#1457c0"/><path d="M18,11 C18,16 11,18 8,14 L5.500,16.500 V9 H13 L10.500,11.500 C13,14 15.500,13 16,11 Z" fill="#1457c0"/><path d="M19,15.500 V19 H15.500 Z" fill="#111"/></svg><div class="hsep" style="left:9px;top:720px;width:15px;"></div><svg style="left:6px;top:724px;" width="20" height="20" viewBox="0 0 20 20" ><path d="M5,11 C3,8 5,7 6.500,9 V4 C6.500,2.500 8.500,2.500 8.500,4 V3 C8.500,1.500 10.500,1.500 10.500,3 V4 C10.500,2.500 12.500,2.500 12.500,4 V6 C12.500,4.500 14.500,4.500 14.500,6 V12 C14.500,16 12,17.500 9.500,17.500 C7,17.500 6,14 5,11 Z" fill="#fff" stroke="#666" stroke-width="1"/><path d="M8.500,4 V9 M10.500,4 V9 M12.500,6 V9" stroke="#888" stroke-width="0.800"/><rect x="8.500" y="12" width="3" height="3" fill="#dfe9fb" stroke="#3a6ac8" stroke-width="0.800"/></svg><svg style="left:6px;top:746px;" width="20" height="20" viewBox="0 0 20 20" ><path d="M14,14 L18.500,18" stroke="#666" stroke-width="2.200" stroke-linecap="round"/><circle cx="9.5" cy="9" r="6.500" fill="#fff" stroke="#666" stroke-width="1.700"/><path d="M9.500,5 V9.500 H13" fill="none" stroke="#1457c0" stroke-width="1.300"/></svg><svg style="left:6px;top:768px;" width="20" height="20" viewBox="0 0 20 20" ><path d="M14,14 L18.500,18" stroke="#666" stroke-width="2.200" stroke-linecap="round"/><circle cx="9.5" cy="9" r="6.500" fill="#fff" stroke="#666" stroke-width="1.700"/><path d="M2,8 L7.500,8 L6,10 C9,8 12,9 13,11 C11.500,11 9,11.500 8,13 L9.500,14.500 H2 Z" fill="#0f4db8"/></svg><svg style="left:6px;top:790px;" width="20" height="20" viewBox="0 0 20 20" ><path d="M14,14 L18.500,18" stroke="#666" stroke-width="2.200" stroke-linecap="round"/><circle cx="9.5" cy="9" r="6.500" fill="#fff" stroke="#666" stroke-width="1.700"/><path d="M6,6 H11 L13,8 V12 H6 Z" fill="#e8e8e8" stroke="#666" stroke-width="1.100"/></svg><svg style="left:6px;top:812px;" width="20" height="20" viewBox="0 0 20 20" ><path d="M6.500,14.500 L2.500,18.500" stroke="#666" stroke-width="2.200" stroke-linecap="round"/><circle cx="11" cy="9" r="6.500" fill="#fff" stroke="#666" stroke-width="1.700"/><path d="M8,12 L14,6 M10,5.500 H14.500 V10" fill="none" stroke="#1457c0" stroke-width="1.600"/></svg><svg style="left:6px;top:834px;" width="20" height="20" viewBox="0 0 20 20" ><path d="M14,14 L18.500,18" stroke="#666" stroke-width="2.200" stroke-linecap="round"/><circle cx="9.5" cy="9" r="6.500" fill="#fff" stroke="#666" stroke-width="1.700"/><circle cx="9.500" cy="9" r="3.500" fill="#1457c0"/><path d="M7.500,9 h4 M9.500,7 v4" stroke="#fff" stroke-width="1.200"/><path d="M9.500,3 v2 M9.500,13 v2 M3.500,9 h2 M13.500,9 h2" stroke="#1457c0" stroke-width="1.200"/></svg><svg style="left:6px;top:856px;" width="20" height="20" viewBox="0 0 20 20" ><path d="M14,14 L18.500,18" stroke="#666" stroke-width="2.200" stroke-linecap="round"/><circle cx="9.5" cy="9" r="6.500" fill="#fff" stroke="#666" stroke-width="1.700"/><rect x="6.500" y="6" width="6" height="6" fill="#1457c0"/><rect x="8" y="7.500" width="3" height="3" fill="#fff"/></svg><svg style="left:6px;top:878px;" width="20" height="20" viewBox="0 0 20 20" ><path d="M14,14 L18.500,18" stroke="#666" stroke-width="2.200" stroke-linecap="round"/><circle cx="9.5" cy="9" r="6.500" fill="#fff" stroke="#666" stroke-width="1.700"/><rect x="5.500" y="6" width="8" height="6" fill="#fff" stroke="#555" stroke-width="1"/><rect x="5.500" y="6" width="8" height="2" fill="#1457c0"/></svg><div class="a" style="left:7px;top:133px;width:15px;height:2px;background:repeating-linear-gradient(90deg,#9aa0ad 0,#9aa0ad 2px,transparent 2px,transparent 4px);"></div><div class="a" style="left:7px;top:688px;width:15px;height:2px;background:repeating-linear-gradient(90deg,#9aa0ad 0,#9aa0ad 2px,transparent 2px,transparent 4px);"></div>
<svg style="left:1257px;top:140px;" width="20" height="20" viewBox="0 0 20 20" ><path d="M4,4 L16,16 M16,4 L4,16" stroke="#d02a10" stroke-width="3.200"/></svg><svg style="left:1257px;top:162px;" width="20" height="20" viewBox="0 0 20 20" ><rect x="2.500" y="2.500" width="6" height="5" fill="#fff" stroke="#1f2b47" stroke-width="1.200"/><rect x="8.500" y="9.500" width="6" height="5" fill="#fff" stroke="#1f2b47" stroke-width="1.200"/><rect x="11.500" y="12.500" width="6" height="5" fill="#fff" stroke="#1f2b47" stroke-width="1.200"/><path d="M10,4 H13 V7" fill="none" stroke="#e02020" stroke-width="1.200"/><path d="M11.500,6 h3 l-1.500,2 z" fill="#e02020"/></svg><svg style="left:1257px;top:184px;" width="20" height="20" viewBox="0 0 20 20" ><path d="M8,4 V16 H3.500 Z M13,4 V16 H17.500 Z" fill="#fff" stroke="#1f2b47" stroke-width="1.300"/><path d="M10.500,2 V18" stroke="#e02020" stroke-width="1.200" stroke-dasharray="5 1.500 1.500 1.500"/></svg><svg style="left:1257px;top:206px;" width="20" height="20" viewBox="0 0 20 20" ><path d="M3.500,17 V10.500 H8.500 V7 Q8.500,3 12.500,3 Q16.500,3 16.500,7 V9" fill="none" stroke="#1f2b47" stroke-width="1.300"/><path d="M6,17 V13 H11 V8 Q11,5.500 12.500,5.500 Q14,5.500 14,8 M6,17 H12" fill="none" stroke="#888" stroke-width="1.100"/><path d="M3.500,17 H12" stroke="#1f2b47" stroke-width="1.300"/></svg><svg style="left:1257px;top:228px;" width="20" height="20" viewBox="0 0 20 20" ><path d="M5,5 H16 V15 H5 Z" fill="none" stroke="#777" stroke-width="1" stroke-dasharray="2.500 2"/><rect x="4" y="3.5" width="3" height="3" fill="#1457c0"/><rect x="4" y="13" width="3" height="3" fill="#1457c0"/><rect x="13.5" y="3.5" width="3" height="3" fill="#1457c0"/><rect x="13.5" y="13" width="3" height="3" fill="#1457c0"/></svg><svg style="left:1257px;top:250px;" width="20" height="20" viewBox="0 0 20 20" ><rect x="2.500" y="3.500" width="6" height="5" fill="#f0f0f0" stroke="#999" stroke-width="1.100"/><rect x="10.500" y="11.500" width="6" height="5" fill="#fff" stroke="#1f2b47" stroke-width="1.200"/><path d="M10.500,5 H13.500 V8" fill="none" stroke="#e02020" stroke-width="1.200"/><path d="M12,7.500 h3 l-1.500,2 z" fill="#e02020"/></svg><svg style="left:1257px;top:272px;" width="20" height="20" viewBox="0 0 20 20" ><path d="M4.500,6 A6.500,6.500 0 1 0 16.500,6.500" fill="none" stroke="#1a5a9a" stroke-width="1.800"/><path d="M14.500,6.500 L17.500,3.500 L18,8 Z" fill="#1a5a9a"/><path d="M8,9.500 h5 M10.500,7 v5" stroke="#e02020" stroke-width="1.300"/></svg><svg style="left:1257px;top:294px;" width="20" height="20" viewBox="0 0 20 20" ><path d="M3.500,3.500 H17.500 V17.500 H10 M3.500,3.500 V10" fill="none" stroke="#888" stroke-width="1" stroke-dasharray="2.500 1.500"/><path d="M3.500,8 H12.500 V17" fill="none" stroke="#888" stroke-width="1" stroke-dasharray="2.500 1.500"/><rect x="3.500" y="11.500" width="6" height="6" fill="#fff" stroke="#1f2b47" stroke-width="1.300"/></svg><svg style="left:1257px;top:316px;" width="20" height="20" viewBox="0 0 20 20" ><path d="M11,4.500 L16.500,15.500 H11" fill="#fff" stroke="#999" stroke-width="1.100"/><path d="M3.500,4.500 H11 V15.500 H3.500 Z" fill="#fff" stroke="#1f2b47" stroke-width="1.300"/></svg><svg style="left:1257px;top:338px;" width="20" height="20" viewBox="0 0 20 20" ><path d="M11.500,7 H16 V15 H11.500" fill="none" stroke="#999" stroke-width="1.800"/><path d="M11.500,7 H4.500 V15 H11.500" fill="none" stroke="#1a7a3a" stroke-width="2"/><path d="M11.500,3 V18" stroke="#333" stroke-width="1.200"/></svg><svg style="left:1257px;top:360px;" width="20" height="20" viewBox="0 0 20 20" ><path d="M17,4 L13,8.500" stroke="#1f2b47" stroke-width="2.200"/><path d="M12,10 L8,14.500" stroke="#888" stroke-width="1.200" stroke-dasharray="1.500 1"/><path d="M7,15.500 L3.500,19" stroke="#1f2b47" stroke-width="1.800"/></svg><svg style="left:1257px;top:382px;" width="20" height="20" viewBox="0 0 20 20" ><path d="M9,6 H4.500 V14.500 H16.500 V6 H13" fill="none" stroke="#1a7a3a" stroke-width="2"/><path d="M8.500,7 L11,4 M11.500,7 L14,4" stroke="#777" stroke-width="1.100"/></svg><svg style="left:1257px;top:404px;" width="20" height="20" viewBox="0 0 20 20" ><path d="M8.500,6 H4.500 V14.500 H16.500 V6 H12.500" fill="none" stroke="#1a7a3a" stroke-width="2"/><path d="M8.500,6 H12.500" stroke="#999" stroke-width="1.600"/></svg><svg style="left:1257px;top:426px;" width="20" height="20" viewBox="0 0 20 20" ><path d="M3.500,10.500 V3.500 H11" fill="none" stroke="#777" stroke-width="1" stroke-dasharray="1 1.200"/><path d="M3.500,17.500 V11.500 L13,3.500 H17.500 V17.500 Z" fill="#eef4fb" stroke="#1f2b47" stroke-width="1.200"/></svg><svg style="left:1257px;top:448px;" width="20" height="20" viewBox="0 0 20 20" ><path d="M3.500,10.500 V3.500 H11" fill="none" stroke="#777" stroke-width="1" stroke-dasharray="1 1.200"/><path d="M3.500,17.500 V13 Q4,4.500 14,3.500 H17.500 V17.500 Z" fill="#eef4fb" stroke="#1f2b47" stroke-width="1.200"/></svg><svg style="left:1257px;top:470px;" width="20" height="20" viewBox="0 0 20 20" ><path d="M8,8 L16,16 L13,19 L5,11 Z" fill="#d82020" stroke="#8a1010" stroke-width="0.600"/><path d="M5,2 L6.500,4.500 L9,3.500 L8.500,6 L11,7.500 L8,8 L5.500,11 L5,8 L2,7.500 L4.500,5.500 Z" fill="#ffd21a" stroke="#c89a00" stroke-width="0.500"/></svg><div class="a" style="left:1258px;top:134px;width:15px;height:2px;background:repeating-linear-gradient(90deg,#9aa0ad 0,#9aa0ad 2px,transparent 2px,transparent 4px);"></div>
<div class="a" style="left:31px;top:130px;width:1220px;height:22px;background:linear-gradient(#d9dce5,#e1e4eb 50%,#ebedf2);border-left:1px solid #b7bcc8;border-top:1px solid #b7bcc8;box-sizing:border-box;"></div>
<svg style="left:31px;top:130px;" width="1222" height="22" viewBox="31 130 1222 22"><path d="M41,135.500 L36.500,141 L41,146.500 Z" fill="none" stroke="#8a8f9a" stroke-width="1"/><path d="M1235,135.500 L1239.500,141 L1235,146.500 Z" fill="none" stroke="#8a8f9a" stroke-width="1"/><path d="M46.500,151 L53,135 Q54,132.500 57,132.500 H132 Q135,132.500 136,135 L142.500,151" fill="#eef0f6" stroke="#a0a5b0" stroke-width="1"/><path d="M136.500,152 L143.500,135 Q144.500,132.500 147.500,132.500 H227 Q230,132.500 231,135 L238,152" fill="#fff" stroke="#a0a5b0" stroke-width="1"/><path d="M225.500,139 L232.500,146 M232.500,139 L225.500,146" stroke="#444" stroke-width="1.200"/></svg>
<span class="t" id="tab1" style="left:58px;top:135px;font-size:12px;color:#1e2a4a;font-weight:normal;letter-spacing:-0.004px;">Drawing1.dwg</span>
<span class="t" id="tab2" style="left:147px;top:135px;font-size:12px;color:#000;font-weight:normal;letter-spacing:-0.201px;text-shadow:0.4px 0 0 #000;transform:scaleX(0.9242);transform-origin:0 0;">FORRO.dwg</span>
<div class="a" style="left:30px;top:131px;width:2px;height:767px;background:linear-gradient(90deg,#aeb3bf,#c6cad4);"></div>
<div class="a" style="left:32px;top:152px;width:1px;height:746px;background:#dfe2e9;"></div>
<svg class="dw" style="left:33px;top:152px;overflow:hidden;" width="1217" height="728" viewBox="33 152 1217 728">
<defs><pattern id="hat" width="11.75" height="11.75" patternUnits="userSpaceOnUse" x="189.5" y="177.5"><path d="M-1,12.75 L12.75,-1 M-1,1 L1,-1 M10.75,12.75 L12.75,10.75" stroke="#929292" stroke-width="1.350" fill="none"/></pattern>
<clipPath id="cl"><rect x="33" y="152" width="1217" height="728"/></clipPath></defs>
<rect x="33" y="152" width="1217" height="728" fill="#000"/>
<rect x="106" y="224" width="1" height="656" fill="#ffffff"/>
<rect x="33" y="357" width="1217" height="1" fill="#ffffff"/>
<rect x="33" y="491" width="1217" height="1" fill="#ffffff"/>
<rect x="33" y="759" width="1217" height="1" fill="#ffffff"/>
<rect x="1155" y="224" width="1" height="656" fill="#ffffff"/>
<rect x="362" y="224" width="1" height="411" fill="#ffffff"/>
<rect x="343.3" y="224" width="1" height="411" fill="#808080"/>
<rect x="33" y="625" width="165" height="1.5" fill="#a0a0a0"/>
<rect x="229" y="625" width="1021" height="1.5" fill="#a0a0a0"/>
<rect x="33" y="683.3" width="416" height="1.5" fill="#c0c0c0"/>
<rect x="205.3" y="441" width="1.5" height="439" fill="#c0c0c0"/>
<rect x="238.5" y="666" width="1.5" height="214" fill="#a0a0a0"/>
<rect x="372.5" y="666" width="1.5" height="214" fill="#a0a0a0"/>
<rect x="1020.3" y="224" width="1.5" height="656" fill="#a0a0a0"/>
<rect x="506" y="640" width="1" height="240" fill="#ffffff"/>
<rect x="641" y="224" width="1" height="656" fill="#ffffff"/>
<rect x="774" y="224" width="1.5" height="656" fill="#a0a0a0"/>
<rect x="857" y="224" width="1.5" height="656" fill="#a5a500"/>
<rect x="861" y="224" width="1" height="656" fill="#ff0000"/>
<rect x="881" y="224" width="2" height="656" fill="#a80000"/>
<rect x="886.5" y="224" width="2" height="656" fill="#a5a500"/>
<rect x="33" y="192.2" width="251" height="1.8" fill="#8a4500"/>
<rect x="33" y="197.2" width="251" height="1.8" fill="#a80000"/>
<rect x="283" y="192" width="1.6" height="32" fill="#e00000"/>
<rect x="33" y="218" width="171" height="1" fill="#ff0000"/>
<rect x="202.5" y="218" width="1.8" height="444" fill="#a80000"/>
<rect x="224" y="218" width="60" height="1" fill="#ff0000"/>
<rect x="224" y="218" width="1" height="423" fill="#ff0000"/>
<rect x="33" y="223.6" width="166" height="1.7" fill="#a5a500"/>
<rect x="197.3" y="224" width="1.9" height="443" fill="#a5a500"/>
<rect x="229" y="223.6" width="55" height="1.7" fill="#a5a500"/>
<rect x="228.4" y="224" width="1.9" height="226" fill="#a5a500"/>
<rect x="229" y="254" width="165" height="1.5" fill="#ffff00"/>
<rect x="229" y="260.3" width="165" height="1.8" fill="#a5a500"/>
<rect x="224" y="640" width="272" height="1" fill="#ff0000"/>
<rect x="203" y="660.2" width="293" height="1.8" fill="#a80000"/>
<rect x="198" y="665.3" width="298" height="1.8" fill="#a5a500"/>
<rect x="291" y="635" width="191" height="1.2" fill="#ffff00"/>
<rect x="285" y="188" width="211" height="2" fill="#808080"/>
<rect x="285" y="223" width="211" height="2" fill="#808080"/>
<rect x="285" y="176" width="1" height="13" fill="#808080"/>
<rect x="383.5" y="152" width="1.8" height="40" fill="#909090"/>
<rect x="396" y="152" width="1" height="40" fill="#f0f0f0"/>
<line x1="288" y1="176" x2="496" y2="176" stroke="#8c8c8c" stroke-width="1.3" stroke-dasharray="10 5.500"/>
<rect x="287.5" y="176" width="1.3" height="13" fill="#8c8c8c"/>
<rect x="296" y="213.8" width="28" height="1.5" fill="#ffffff"/>
<rect x="336" y="213.8" width="30" height="1.5" fill="#ffffff"/>
<rect x="372" y="213.8" width="31" height="1.5" fill="#ffffff"/>
<rect x="425" y="213.8" width="26" height="1.5" fill="#ffffff"/>
<rect x="465" y="213.8" width="31" height="1.5" fill="#ffffff"/>
<path d="M411.90000000000003,214.700 H404.3 V221.200 H411.90000000000003 M411.90000000000003,214 V224 M416.7,214.700 H424.3 V221.200 H416.7 M416.7,214 V224 M411.90000000000003,208.500 H416.7" fill="none" stroke="#ffff00" stroke-width="1.400"/>
<line x1="411.90000000000003" y1="176" x2="411.90000000000003" y2="214" stroke="#8c8c8c" stroke-width="1.3" stroke-dasharray="9.500 5"/>
<line x1="416.7" y1="176" x2="416.7" y2="214" stroke="#8c8c8c" stroke-width="1.3" stroke-dasharray="9.500 5"/>
<path d="M284,208.5 h4 M287.5,214 v10 M287.5,214.5 h8 v6.500 h-8" fill="none" stroke="#ffff00" stroke-width="1.2"/>
<line x1="343" y1="224" x2="359.5" y2="240" stroke="#989898" stroke-width="4" />
<line x1="327.5" y1="619.5" x2="360" y2="651" stroke="#989898" stroke-width="5" />
<path d="M394,262 A165,165 0 0 1 229,419" fill="none" stroke="#d8d8d8" stroke-width="1.5"/>
<rect x="394" y="254" width="1" height="10" fill="#c8c8c8"/>
<rect x="189.5" y="177.5" width="205" height="205" fill="url(#hat)" stroke="#808080" stroke-width="1.500"/>
<rect x="850" y="192.2" width="96" height="1.8" fill="#8a4500"/>
<rect x="850" y="197.2" width="96" height="1.8" fill="#a80000"/>
<rect x="850" y="218" width="96" height="1" fill="#ff0000"/>
<rect x="850" y="223.6" width="96" height="1.7" fill="#a5a500"/>
<rect x="945.5" y="189" width="1.4" height="35" fill="#e00000"/>
<rect x="946" y="188" width="304" height="2" fill="#808080"/>
<rect x="946" y="223" width="304" height="2" fill="#808080"/>
<rect x="946" y="189" width="1" height="4" fill="#ffffff"/>
<line x1="951" y1="176" x2="1250" y2="176" stroke="#8c8c8c" stroke-width="1.2" stroke-dasharray="10 5.500" stroke-dashoffset="5.100"/>
<rect x="951" y="176" width="1.3" height="13" fill="#8c8c8c"/>
<rect x="958" y="213.8" width="29" height="1.5" fill="#ffffff"/>
<rect x="999" y="213.8" width="27" height="1.5" fill="#ffffff"/>
<rect x="1038" y="213.8" width="28" height="1.5" fill="#ffffff"/>
<rect x="1088" y="213.8" width="28" height="1.5" fill="#ffffff"/>
<rect x="1129" y="213.8" width="26" height="1.5" fill="#ffffff"/>
<rect x="1167" y="213.8" width="27" height="1.5" fill="#ffffff"/>
<rect x="1217" y="213.8" width="28" height="1.5" fill="#ffffff"/>
<path d="M1075.1,214.700 H1067.5 V221.200 H1075.1 M1075.1,214 V224 M1079.9,214.700 H1087.5 V221.200 H1079.9 M1079.9,214 V224 M1075.1,208.500 H1079.9" fill="none" stroke="#ffff00" stroke-width="1.400"/>
<line x1="1075.1" y1="176" x2="1075.1" y2="214" stroke="#8c8c8c" stroke-width="1.3" stroke-dasharray="9.500 5"/>
<line x1="1079.9" y1="176" x2="1079.9" y2="214" stroke="#8c8c8c" stroke-width="1.3" stroke-dasharray="9.500 5"/>
<path d="M1203.1,214.700 H1195.5 V221.200 H1203.1 M1203.1,214 V224 M1207.9,214.700 H1215.5 V221.200 H1207.9 M1207.9,214 V224 M1203.1,208.500 H1207.9" fill="none" stroke="#ffff00" stroke-width="1.400"/>
<line x1="1203.1" y1="176" x2="1203.1" y2="214" stroke="#8c8c8c" stroke-width="1.3" stroke-dasharray="9.500 5"/>
<line x1="1207.9" y1="176" x2="1207.9" y2="214" stroke="#8c8c8c" stroke-width="1.3" stroke-dasharray="9.500 5"/>
<path d="M946.5,208.5 h5 M951,208 v16 M951.5,214.5 h7 v6.500 h-7" fill="none" stroke="#ffff00" stroke-width="1.2"/>
<rect x="908" y="152" width="1.3" height="15" fill="#808080"/>
<rect x="850.5" y="177.5" width="203" height="205" fill="url(#hat)" stroke="#808080" stroke-width="1.500"/>
<rect x="1020.3" y="224" width="1.5" height="159" fill="#a0a0a0"/>
<path d="M850,348.5 H1053.5 M1053.5,224 V348.5 L1093.5,389.5 H1250 M1093.5,389.5 V676.5 H1250" fill="none" stroke="#0000ff" stroke-width="1.1"/>
<path d="M945.5,454.5 H966 V557.5 H945.5 Z M966,463.5 L977,454.5 H1059 L1069.5,464 V547 L1059,557.5 H977 L966,547" fill="none" stroke="#0000ff" stroke-width="1.1"/>
<path d="M229.5,450.5 H291.5 V635.5 H229.5 Z M229.5,450.5 L291.5,635.5 M482.5,450.5 V635.5 H496 M482.5,450.5 H496" fill="none" stroke="#0000ff" stroke-width="1.1"/>
<path d="M482.5,450.5 L495,484 L482.5,512 H496" fill="none" stroke="#00c8c8" stroke-width="1"/>
<g fill="none" stroke="#0000ff" stroke-width="1"><rect x="63.5" y="233.5" width="6.5" height="112"/><path d="M63.5,235.5 h6.5 M63.5,343.5 h6.5 M63.5,283.5 h6.5 M63.5,295.5 h6.5 M65,298.5 h5 M65,305.5 h5"/><rect x="70" y="264.5" width="10" height="46.5"/><path d="M33,230 C45,232 57,238 59,243 C59,246 55,246 52,244 C46,241 40,240 33,240"/><path d="M33,231.5 C44,233 55,239 57.5,243.5"/><path d="M33,246 C46,247 58,252 60,262 C62,272 62,295 63,305 C63,315 55,325 45,325 H33"/><path d="M33,247.5 C45,248.5 56.5,253 58.5,262.5 C60.5,272 60.5,295 61.5,305 C61,314 53,323.5 45,323.5"/><path d="M33,249 C44,250 55,254 57,263 C59,272 59.5,295 60,305"/></g>
<circle cx="278" cy="272.8" r="16.800" fill="none" stroke="#ffffff" stroke-width="4.900"/>
<path d="M296,269.3 L324,270.0 L324,265.8 L345.5,272.5 L324,278.8 L324,275.2 L296,276.3 Z" fill="#ffffff"/>
<path d="M274.5,290.8 L275.7,318.8 L271.2,318.8 L278.3,340.3 L284.4,318.8 L280.6,318.8 L281.5,290.8 Z" fill="#ffffff"/>
<circle cx="936.2" cy="272.8" r="16.800" fill="none" stroke="#ffffff" stroke-width="4.900"/>
<path d="M954.2,269.3 L982.2,270.0 L982.2,265.8 L1003.7,272.5 L982.2,278.8 L982.2,275.2 L954.2,276.3 Z" fill="#ffffff"/>
<path d="M932.7,290.8 L933.9000000000001,318.8 L929.4000000000001,318.8 L936.5,340.3 L942.6,318.8 L938.8000000000001,318.8 L939.7,290.8 Z" fill="#ffffff"/>
<circle cx="266" cy="336" r="36" fill="none" stroke="#e0e0e0" stroke-width="1"/>
<text x="233.600" y="349" font-family="Liberation Sans, sans-serif" font-size="35.800" fill="#00ffff" stroke="#00ffff" stroke-width="0.5">P04</text>
<text x="391" y="351" font-family="Liberation Sans, sans-serif" font-size="57.5" fill="#ffff00" stroke="#ffff00" stroke-width="0.9">ALM</text>
<text x="1023" y="523" font-family="Liberation Sans, sans-serif" font-size="57.5" fill="#ffff00" stroke="#ffff00" stroke-width="0.9">COORD.</text>
<text x="1201.500" y="594" font-family="Liberation Sans, sans-serif" font-size="48.500" fill="#ffff00" stroke="#ffff00" stroke-width="0.8">A:</text>
<text transform="translate(334,490) rotate(-90)" font-family="DejaVu Sans Light, DejaVu Sans, sans-serif" font-weight="200" font-size="55.5" fill="#00d0d0" stroke="#000" stroke-width="1.050" paint-order="fill stroke">2.00</text>
<circle cx="442.5" cy="484" r="33.5" fill="none" stroke="#00c8c8" stroke-width="1.1"/>
<clipPath id="c1a"><path d="M446.700,470 H449.500 V505 H446.700 Z M434,470 H449.500 V491 H434 Z"/></clipPath><clipPath id="c1b"><path d="M1243.200,642 H1246 V679 H1243.200 Z M1230,642 H1246 V664 H1230 Z"/></clipPath>
<text x="447.700" y="504" text-anchor="middle" clip-path="url(#c1a)" font-family="DejaVu Sans Light, DejaVu Sans, sans-serif" font-weight="200" font-size="41" fill="#00c8c8" stroke="#000" stroke-width="0.5" paint-order="fill stroke">1</text>
<circle cx="1240" cy="658" r="33" fill="none" stroke="#00c8c8" stroke-width="1.1"/>
<text x="1244.200" y="678" text-anchor="middle" clip-path="url(#c1b)" font-family="DejaVu Sans Light, DejaVu Sans, sans-serif" font-weight="200" font-size="41" fill="#00c8c8" stroke="#000" stroke-width="0.5" paint-order="fill stroke">1</text>
<path d="M450.5,574.5 L419.5,574.5 A31,31 0 0 1 450.5,543.5 Z M450.5,574.5 L481.5,574.5 A31,31 0 0 1 450.5,605.5 Z" fill="#808080"/>
<circle cx="450.5" cy="574.5" r="31" fill="none" stroke="#00e0e0" stroke-width="1"/>
<path d="M403.5,574.5 H497.5 M450.5,528.5 V621.5" stroke="#00e0e0" stroke-width="1" fill="none"/>
<path d="M1227.5,759.5 L1196.5,759.5 A31,31 0 0 1 1227.5,728.5 Z M1227.5,759.5 L1258.5,759.5 A31,31 0 0 1 1227.5,790.5 Z" fill="#808080"/>
<circle cx="1227.5" cy="759.5" r="31" fill="none" stroke="#00e0e0" stroke-width="1"/>
<path d="M1180.5,759.5 H1274.5 M1227.5,713.5 V806.5" stroke="#00e0e0" stroke-width="1" fill="none"/>
<circle cx="206" cy="684" r="5" fill="#000" stroke="#d0d0d0" stroke-width="1"/><path d="M202,686 l6,-6 M203,689 l7,-7 M201.5,683 l4,-4" stroke="#d0d0d0" stroke-width="1"/>
<rect x="58" y="841" width="14" height="14" fill="none" stroke="#e8e8e8" stroke-width="1"/>
<path d="M65.500,848 V787" stroke="#00a800" stroke-width="1.800"/><path d="M58.500,787 L65.500,767 L72.500,787 Z" fill="none" stroke="#00f000" stroke-width="1.100"/>
<path d="M65,848.500 H126" stroke="#b00000" stroke-width="1.600"/><path d="M126.5,841.5 L147,848.5 L126.5,855.5 Z" fill="none" stroke="#ff0000" stroke-width="1"/>
<path d="M59.5,739 L65.5,745.5 L71.5,739 M65.5,745.5 V752" stroke="#e0e0e0" stroke-width="1" fill="none"/>
<path d="M162,841.5 L173,855 M173,841.5 L162,855" stroke="#e0e0e0" stroke-width="1" fill="none"/>
<path d="M33,846 L40,865 L33,865 Z" fill="#ffff00"/>
</svg>
<div class="a" style="left:1249px;top:152px;width:2px;height:746px;background:#f4f5f8;"></div>
<div class="a" style="left:1251px;top:131px;width:1px;height:767px;background:#aeb3bf;"></div>
<div class="a" style="left:33px;top:880px;width:1218px;height:18px;background:#f0f0f0;border-right:2px solid #fff;border-bottom:2px solid #fff;box-sizing:border-box;"></div>
<svg style="left:33px;top:880px;" width="400" height="18" viewBox="33 880 400 18"><rect x="33" y="880" width="16" height="15" fill="#ececec"/><path d="M48.500,880 V895 M33,894.500 H49" stroke="#a8a8a8" stroke-width="1"/><path d="M33.500,880 V894" stroke="#fff" stroke-width="1"/><rect x="49" y="880" width="16" height="15" fill="#ececec"/><path d="M64.500,880 V895 M49,894.500 H65" stroke="#a8a8a8" stroke-width="1"/><path d="M49.500,880 V894" stroke="#fff" stroke-width="1"/><rect x="65" y="880" width="16" height="15" fill="#ececec"/><path d="M80.500,880 V895 M65,894.500 H81" stroke="#a8a8a8" stroke-width="1"/><path d="M65.500,880 V894" stroke="#fff" stroke-width="1"/><rect x="81" y="880" width="16" height="15" fill="#ececec"/><path d="M96.500,880 V895 M81,894.500 H97" stroke="#a8a8a8" stroke-width="1"/><path d="M81.500,880 V894" stroke="#fff" stroke-width="1"/><path d="M37.500,883 V892" stroke="#a0a0a0" stroke-width="1.400"/><path d="M44.500,883 V892 L39,887.500 Z" fill="#a0a0a0"/><path d="M60,883 V892 L54,887.500 Z" fill="#a0a0a0"/><path d="M71,883 V892 L77,887.500 Z" fill="#a0a0a0"/><path d="M85,883 V892 L90.500,887.500 Z" fill="#a0a0a0"/><path d="M92,883 V892" stroke="#a0a0a0" stroke-width="1.400"/><path d="M98,880 L104.500,895.500 H145 L151,880 Z" fill="#fff" stroke="none"/><path d="M98,880 L104.500,895.500 H145 L151,880" fill="none" stroke="#111" stroke-width="1"/><path d="M148.500,887.500 L152.500,895.500 H230 L234.500,880 M232,882 L238.800,895.500 H329 L336,880" fill="none" stroke="#111" stroke-width="1"/></svg>
<span class="t" id="lt0" style="left:109px;top:882px;font-size:12px;color:#000;font-weight:bold;letter-spacing:-0.200px;transform:scaleX(0.9447);transform-origin:0 0;">Model</span>
<span class="t" id="lt1" style="left:159.5px;top:882px;font-size:12px;color:#1e2a4a;font-weight:normal;letter-spacing:-0.200px;transform:scaleX(0.9206);transform-origin:0 0;">06_TERREO</span>
<span class="t" id="lt2" style="left:247px;top:882px;font-size:12px;color:#1e2a4a;font-weight:normal;letter-spacing:-0.199px;transform:scaleX(0.9169);transform-origin:0 0;">07_SUPERIOR</span>
<div class="a" style="left:0;top:898px;width:1282px;height:7px;background:linear-gradient(#d5d8e0,#c6cad4 40%,#aeb3bf 60%,#c3c7d0);"></div>
<div class="a" style="left:2px;top:905px;width:19px;height:68px;background:#b5bbc7;"></div>
<div class="a" style="left:21px;top:905px;width:1258px;height:49px;background:#d9d9d9;border-left:1px solid #8a8f9a;box-sizing:border-box;"></div>
<div class="a" style="left:1263px;top:905px;width:16px;height:49px;background:#f1f1f1;border-left:1px solid #e4e4e4;box-sizing:border-box;"></div>
<svg style="left:2px;top:905px;" width="19" height="50" viewBox="0 0 19 50"><path d="M6,5.500 L13,12.500 M13,5.500 L6,12.500" stroke="#7a7f8a" stroke-width="1.200"/><path d="M5.500,27.500 H14 L9.700,32.500 Z" fill="#7a7f8a"/></svg><svg style="left:1263px;top:905px;" width="16" height="49" viewBox="0 0 16 49"><path d="M4.500,11.500 L8,8 L11.500,11.500 Z" fill="#444"/><path d="M4.500,37 L8,40.500 L11.500,37 Z" fill="#444"/></svg>
<span class="t" id="c1" style="left:23px;top:906.3px;font-size:13.33px;color:#000;font-weight:normal;letter-spacing:0.000px;font-family:'Liberation Mono', monospace;">Comando: RE</span>
<span class="t" id="c2" style="left:23px;top:920.4px;font-size:13.33px;color:#000;font-weight:normal;letter-spacing:0.000px;font-family:'Liberation Mono', monospace;">_REGEN</span>
<span class="t" id="c3" style="left:23px;top:934.2px;font-size:13.33px;color:#000;font-weight:normal;letter-spacing:0.000px;font-family:'Liberation Mono', monospace;">Regenerating model.</span>
<div class="a" style="left:22px;top:954px;width:1257px;height:17px;background:#0000ff;"></div>
<div class="a" style="left:21px;top:953px;width:1258px;height:1px;background:#8a8f9a;"></div>
<div class="a" style="left:21px;top:971px;width:1258px;height:2px;background:#e9ebf0;"></div>
<span class="t" id="c4" style="left:23px;top:955.5px;font-size:13.33px;color:#ff8a50;font-weight:normal;letter-spacing:0.000px;font-family:'Liberation Mono', monospace;">Comando:</span>
<div class="a" style="left:0;top:974px;width:1282px;height:22px;background:linear-gradient(#d7dae1 0,#c3c7cf 25%,#a5a9b3 55%,#b9bdc6 80%,#d5d8de 100%);"></div>
<span class="t" id="ready" style="left:5.5px;top:979px;font-size:12px;color:#3a3f4c;font-weight:normal;letter-spacing:-0.204px;transform:scaleX(0.9148);transform-origin:0 0;">Ready</span>
<div class="a" style="left:736px;top:975px;width:1px;height:19px;background:#8f939d;box-shadow:1px 0 0 #d6d9df;"></div><div class="a" style="left:745px;top:975px;width:1px;height:19px;background:#8f939d;box-shadow:1px 0 0 #d6d9df;"></div><div class="a" style="left:872px;top:975px;width:1px;height:19px;background:#8f939d;box-shadow:1px 0 0 #d6d9df;"></div><div class="a" style="left:902px;top:975px;width:1px;height:19px;background:#8f939d;box-shadow:1px 0 0 #d6d9df;"></div><div class="a" style="left:943px;top:975px;width:1px;height:19px;background:#8f939d;box-shadow:1px 0 0 #d6d9df;"></div><div class="a" style="left:965px;top:975px;width:1px;height:19px;background:#8f939d;box-shadow:1px 0 0 #d6d9df;"></div><div class="a" style="left:987px;top:975px;width:1px;height:19px;background:#8f939d;box-shadow:1px 0 0 #d6d9df;"></div><div class="a" style="left:1009px;top:975px;width:1px;height:19px;background:#8f939d;box-shadow:1px 0 0 #d6d9df;"></div><div class="a" style="left:1031px;top:975px;width:1px;height:19px;background:#8f939d;box-shadow:1px 0 0 #d6d9df;"></div><div class="a" style="left:1053px;top:975px;width:1px;height:19px;background:#8f939d;box-shadow:1px 0 0 #d6d9df;"></div><div class="a" style="left:1075px;top:975px;width:1px;height:19px;background:#8f939d;box-shadow:1px 0 0 #d6d9df;"></div><div class="a" style="left:1097px;top:975px;width:1px;height:19px;background:#8f939d;box-shadow:1px 0 0 #d6d9df;"></div><div class="a" style="left:1120px;top:975px;width:1px;height:19px;background:#8f939d;box-shadow:1px 0 0 #d6d9df;"></div><div class="a" style="left:1141px;top:975px;width:1px;height:19px;background:#8f939d;box-shadow:1px 0 0 #d6d9df;"></div><div class="a" style="left:1185px;top:975px;width:1px;height:19px;background:#8f939d;box-shadow:1px 0 0 #d6d9df;"></div><div class="a" style="left:1207px;top:975px;width:1px;height:19px;background:#8f939d;box-shadow:1px 0 0 #d6d9df;"></div><div class="a" style="left:1229px;top:975px;width:1px;height:19px;background:#8f939d;box-shadow:1px 0 0 #d6d9df;"></div><div class="a" style="left:1251px;top:975px;width:1px;height:19px;background:#8f939d;box-shadow:1px 0 0 #d6d9df;"></div><span class="t" id="coord" style="left:751px;top:979px;font-size:12px;color:#2d3340;font-weight:normal;letter-spacing:-0.200px;transform:scaleX(0.9179);transform-origin:0 0;">19.97,33.02,.00</span><span class="t" id="y2010" style="left:877.5px;top:979px;font-size:12px;color:#2d3340;font-weight:normal;letter-spacing:-0.201px;transform:scaleX(0.8811);transform-origin:0 0;">2010</span><span class="t" id="s11" style="left:927px;top:979px;font-size:12px;color:#2d3340;font-weight:normal;letter-spacing:-0.204px;transform:scaleX(0.8903);transform-origin:0 0;">1:1</span><span class="t" id="smodel" style="left:1146px;top:979px;font-size:12px;color:#3a3350;font-weight:normal;letter-spacing:-0.200px;transform:scaleX(0.9072);transform-origin:0 0;">MODEL</span><svg style="left:908px;top:977px;" width="16" height="16" viewBox="0 0 16 16" ><path d="M7.500,0.800 L10,9 L14.500,13.500 L7.500,11.500 L0.500,13.500 L5,9 Z" fill="#fff" stroke="#2a2a2a" stroke-width="1.300"/><path d="M7.500,3.500 V10" stroke="#999" stroke-width="0.800"/></svg><svg style="left:948px;top:977px;" width="16" height="16" viewBox="0 0 16 16" ><rect x="0" y="0" width="16" height="16" fill="#e6e05c"/><path d="M7.500,0.800 L10,9 L14.500,13.500 L7.500,11.500 L0.500,13.500 L5,9 Z" fill="#fff" stroke="#2a2a2a" stroke-width="1.300"/><path d="M7.500,3.500 V10" stroke="#999" stroke-width="0.800"/><path d="M12.500,4.500 A3.300,3.300 0 1 1 14.500,11 V13.500 H11 V11 A3.300,3.300 0 0 1 9.500,7 Z" fill="#fbf4c0" stroke="#e8e000" stroke-width="0.900"/></svg><svg style="left:970px;top:977px;" width="17" height="16" viewBox="0 0 17 16" ><path d="M7.500,0.800 L10,9 L14.500,13.500 L7.500,11.500 L0.500,13.500 L5,9 Z" fill="#fff" stroke="#2a2a2a" stroke-width="1.300"/><path d="M7.500,3.500 V10" stroke="#999" stroke-width="0.800"/><path d="M12,2 L15.500,1 L14,4 L16,4 L12,9 L13,5.500 L11,6 Z" fill="#b8863a" stroke="#7a5a20" stroke-width="0.400"/></svg><svg style="left:992px;top:977px;" width="16" height="16" viewBox="0 0 16 16" ><rect x="0.500" y="0.500" width="15" height="15" fill="#d8d8d8" stroke="#444" stroke-width="1.200"/><path d="M3.500,0.500 V15.500 M6.500,0.500 V15.500 M9.500,0.500 V15.500 M12.500,0.500 V15.500 M0.500,3.500 H15.500 M0.500,6.500 H15.500 M0.500,9.500 H15.500 M0.500,12.500 H15.500" stroke="#666" stroke-width="1.400"/><path d="M6.500,1 V15" stroke="#18b030" stroke-width="1"/><path d="M0,9.500 H13" stroke="#e81818" stroke-width="1.200"/><rect x="4.500" y="7.500" width="4" height="4" fill="#e8e8e8" stroke="#e81818" stroke-width="1.200"/></svg><svg style="left:1014px;top:977px;" width="16" height="16" viewBox="0 0 16 16" ><rect x="0.500" y="0.500" width="15" height="15" fill="#d0d0d0" stroke="#444" stroke-width="1.200"/><path d="M3.500,0.500 V15.500 M6.500,0.500 V15.500 M9.500,0.500 V15.500 M12.500,0.500 V15.500 M0.500,3.500 H15.500 M0.500,6.500 H15.500 M0.500,9.500 H15.500 M0.500,12.500 H15.500" stroke="#666" stroke-width="1.400"/></svg><svg style="left:1036px;top:977px;" width="16" height="16" viewBox="0 0 16 16" ><path d="M2.500,0 V13.500" stroke="#18a030" stroke-width="1.300"/><path d="M2,13.500 H16" stroke="#e81818" stroke-width="1.300"/><path d="M2.500,7.500 H8.500 V13.500" fill="none" stroke="#9a9a9a" stroke-width="1"/></svg><svg style="left:1058px;top:977px;" width="16" height="16" viewBox="0 0 16 16" ><rect x="0" y="0" width="16" height="16" fill="#e6e05c"/><circle cx="8" cy="8" r="6.800" fill="none" stroke="#2a2a2a" stroke-width="1.600"/><path d="M14.500,2 L7.500,9 H15.500" fill="none" stroke="#e81818" stroke-width="1.300"/></svg><svg style="left:1080px;top:977px;" width="16" height="16" viewBox="0 0 16 16" ><rect x="0" y="0" width="16" height="16" fill="#e6e05c"/><path d="M0,7.500 H16 M6.500,0 V16" stroke="#1e2a44" stroke-width="1.300"/><circle cx="6.500" cy="7.500" r="1.600" fill="#fff" stroke="#e81818" stroke-width="1.200"/></svg><svg style="left:1102px;top:977px;" width="16" height="16" viewBox="0 0 16 16" ><rect x="0" y="0" width="16" height="16" fill="#e6e05c"/><path d="M15,0.500 L1,14.500 H12.500" fill="none" stroke="#1e2a44" stroke-width="1.600"/><path d="M6,5 L10,9.500" stroke="#1e2a44" stroke-width="1.200"/></svg><svg style="left:1125px;top:977px;" width="16" height="16" viewBox="0 0 16 16" ><path d="M0,7.500 H15 M7.500,0 V15.500" stroke="#1a1a1a" stroke-width="1.600"/></svg><svg style="left:1189px;top:977px;" width="17" height="16" viewBox="0 0 17 16" ><g transform="translate(8.500,8)"><rect x="-1.700" y="-8" width="3.400" height="5" fill="#1a6ad0" transform="rotate(0)"/><rect x="-1.700" y="-8" width="3.400" height="5" fill="#1a6ad0" transform="rotate(45)"/><rect x="-1.700" y="-8" width="3.400" height="5" fill="#1a6ad0" transform="rotate(90)"/><rect x="-1.700" y="-8" width="3.400" height="5" fill="#1a6ad0" transform="rotate(135)"/><rect x="-1.700" y="-8" width="3.400" height="5" fill="#1a6ad0" transform="rotate(180)"/><rect x="-1.700" y="-8" width="3.400" height="5" fill="#1a6ad0" transform="rotate(225)"/><rect x="-1.700" y="-8" width="3.400" height="5" fill="#1a6ad0" transform="rotate(270)"/><rect x="-1.700" y="-8" width="3.400" height="5" fill="#1a6ad0" transform="rotate(315)"/><circle r="5.600" fill="#1a6ad0"/><circle r="2.200" fill="#b9bdc7"/></g></svg><svg style="left:1212px;top:977px;" width="16" height="16" viewBox="0 0 16 16" ><rect x="0.500" y="1.500" width="9" height="7" fill="#fff" stroke="#1a5ab0" stroke-width="1.100"/><rect x="0" y="1" width="10" height="2.200" fill="#1a5ab0"/><rect x="5.500" y="6.500" width="9" height="7" fill="#fff" stroke="#1a5ab0" stroke-width="1.100"/><rect x="5" y="6" width="10" height="2.200" fill="#1a5ab0"/></svg><svg style="left:1234px;top:977px;" width="16" height="16" viewBox="0 0 16 16" ><circle cx="8" cy="8" r="7" fill="#fff" stroke="#222" stroke-width="1.700"/><path d="M8,12 L14,4.500" stroke="#1a7ae0" stroke-width="1.500"/><circle cx="8" cy="12" r="1.200" fill="#1a7ae0"/></svg><svg style="left:1255px;top:977px;" width="18" height="16" viewBox="0 0 18 16" ><circle cx="9" cy="8.500" r="8" fill="url(#gok)" stroke="#2a8a22" stroke-width="0.800"/><path d="M4.500,8.500 L8,12 L13.500,5" fill="none" stroke="#fff" stroke-width="2.300"/></svg>
<div class="a" style="left:0;top:0;width:1282px;height:996px;box-sizing:border-box;border:1px solid #1c1f26;border-radius:7px 7px 6px 6px;pointer-events:none;box-shadow:0 0 0 8px #fff;"></div>
<span class="t" id="vista" style="left:179px;top:54px;font-size:12.5px;color:#1c1c24;font-weight:normal;letter-spacing:-0.200px;transform:scaleX(0.9156);transform-origin:0 0;">VISTA</span>
<span class="t" id="bylayer" style="left:395px;top:54px;font-size:12.5px;color:#1c1c24;font-weight:normal;letter-spacing:-0.199px;transform:scaleX(0.8731);transform-origin:0 0;">BYLAYER</span>
<span class="t" id="bycolor" style="left:931px;top:54.5px;font-size:12px;color:#7d7d7d;font-weight:normal;letter-spacing:-0.202px;transform:scaleX(0.8698);transform-origin:0 0;">BYCOLOR</span>
<div class="a" style="left:1px;top:23px;width:1px;height:972px;background:#dfe3ea;"></div>
<div class="a" style="left:1280px;top:23px;width:1px;height:972px;background:#c9cdd6;"></div>
<div class="a" style="left:494px;top:41px;width:410px;height:834px;box-sizing:border-box;background:#fbfbfb;border:1px solid #d62810;"></div><div class="a" style="left:496px;top:43px;width:24px;height:806px;background:#e9edf6;border-right:1px solid #f8f9fc;box-shadow:inset -1px 0 0 #dfe3ec;"></div><svg style="left:499px;top:46px;" width="16" height="16" viewBox="0 0 16 16" ><path d="M1.5,1.500 H5 V2 H13.5 V4.800 H7.500 V6.600 H13.5 V9.400 H7.500 V11.200 H13.5 V14 H5 V14.500 H1.5 Z" fill="#5b8ff0" stroke="#101828" stroke-width="1"/></svg><span class="t" id="mi0a" style="left:525px;top:48.7px;font-size:11.5px;color:#464b62;font-weight:normal;letter-spacing:-0.341px;">Efq_Blocos_A -</span><span class="t" id="mi0" style="left:606.3px;top:48.7px;font-size:11.5px;color:#464b62;font-weight:normal;letter-spacing:0.052px;">biblioteca de blocos contáveis</span><svg style="left:499px;top:68px;" width="16" height="16" viewBox="0 0 16 16" ><path d="M14.5,1.500 H11 V2 H2.5 V4.800 H8.500 V6.600 H2.5 V9.400 H8.500 V11.200 H2.5 V14 H11 V14.500 H14.5 Z" fill="#3a63c8" stroke="#0a1020" stroke-width="1"/></svg><span class="t" id="mi1a" style="left:525px;top:70.7px;font-size:11.5px;color:#464b62;font-weight:normal;letter-spacing:-0.390px;">Efq_Blocos_B -</span><span class="t" id="mi1" style="left:606.3px;top:70.7px;font-size:11.5px;color:#464b62;font-weight:normal;letter-spacing:0.064px;">biblioteca de blocos não contáveis</span><div class="ms" style="top:90px;"></div><svg style="left:499px;top:98px;" width="16" height="16" viewBox="0 0 16 16" ><rect x="9" y="1" width="4" height="9" fill="#cdeff5"/><rect x="0" y="10" width="16" height="4" fill="#cdeff5"/><path d="M0,10.5 H9 V1 M13,1 V10.5 H16 M0,14.5 H16" fill="none" stroke="#1a1a1a" stroke-width="1.1"/><path d="M1,12.5 H15 M11,2 V10" stroke="#1f6a86" stroke-width="1" stroke-dasharray="1 1" fill="none"/></svg><span class="t" id="mi2a" style="left:525px;top:100.7px;font-size:11.5px;color:#464b62;font-weight:normal;letter-spacing:-0.239px;">Efq_Alvenarias -</span><span class="t" id="mi2" style="left:612.9px;top:100.7px;font-size:11.5px;color:#464b62;font-weight:normal;letter-spacing:0.029px;">especificar alvenarias por pontos ou entidades</span><svg style="left:499px;top:120px;" width="16" height="16" viewBox="0 0 16 16" ><path d="M1.5,2.5 H14.5 V14.5 H4.5 V11.5 H1.5 Z" fill="url(#gcy)" stroke="#101010" stroke-width="1.2"/></svg><span class="t" id="mi3a" style="left:525px;top:122.7px;font-size:11.5px;color:#464b62;font-weight:normal;letter-spacing:-0.284px;">Efq_Especificar -</span><span class="t" id="mi3" style="left:614.5px;top:122.7px;font-size:11.5px;color:#464b62;font-weight:normal;letter-spacing:0.074px;">pisos e/ou tetos, círculos ou polilinhas fechadas</span><svg style="left:499px;top:142px;" width="16" height="16" viewBox="0 0 16 16" ><path d="M3.5,0 V16 M12.5,0 V3 M0,3.5 H16 M0,13.5 H5 M12,13.5 H16 M13.500,12 V16" stroke="#333" stroke-width="1" fill="none"/><path d="M4,6 l7,7 M4,9 l4,4 M5,4 l6,6 M8,4 l4,4 M11,4 l2,2" stroke="#5b7a70" stroke-width="0.9" fill="none"/><path d="M7,14.8 L8,11.5 L13.2,6.3 L15.4,8.5 L10.2,13.7 Z" fill="#f3b32a" stroke="#9a6a10" stroke-width="0.5"/><path d="M13.2,6.3 L14.2,5.3 L16,7.5 L15.4,8.5 Z" fill="#c8732a"/><path d="M7,14.8 L8,11.5 L10.2,13.7 Z" fill="#f1e3c8" stroke="#7a6a50" stroke-width="0.4"/><path d="M7,14.8 l0.5,-1.4 l0.9,0.9 Z" fill="#333"/></svg><span class="t" id="mi4a" style="left:525px;top:144.7px;font-size:11.5px;color:#464b62;font-weight:normal;letter-spacing:-0.201px;">Efq_Tabelar -</span><span class="t" id="mi4" style="left:598.1px;top:144.7px;font-size:11.5px;color:#464b62;font-weight:normal;letter-spacing:0.008px;">gerar tabela de pisos, paredes e/ou tetos</span><svg style="left:499px;top:164px;" width="16" height="16" viewBox="0 0 16 16" ><path d="M1.5,14.5 L13.5,2.5 M6.5,2 H14 V9.5" fill="none" stroke="#0f1f9a" stroke-width="2"/></svg><span class="t" id="mi5a" style="left:525px;top:166.7px;font-size:11.5px;color:#464b62;font-weight:normal;letter-spacing:-0.166px;">Efq_Export -</span><span class="t" id="mi5" style="left:594.2px;top:166.7px;font-size:11.5px;color:#464b62;font-weight:normal;letter-spacing:0.024px;">exportar dados de pisos, paredes e/ou tetos</span><div class="ms" style="top:186px;"></div><svg style="left:499px;top:194px;" width="16" height="16" viewBox="0 0 16 16" ><path d="M3.500,3.5 H13.5 V8.5 H9.5 V13.5 H3.5 Z" fill="#9fe3ea" stroke="#101010" stroke-width="1.2"/><rect x="2" y="2" width="3" height="3" fill="#ff1010"/><rect x="12" y="2" width="3" height="3" fill="#ff1010"/><rect x="12" y="7" width="3" height="3" fill="#ff1010"/><rect x="8" y="7" width="3" height="3" fill="#ff1010"/><rect x="8" y="12" width="3" height="3" fill="#ff1010"/><rect x="2" y="12" width="3" height="3" fill="#ff1010"/></svg><span class="t" id="mi6a" style="left:525px;top:196.7px;font-size:11.5px;color:#464b62;font-weight:normal;letter-spacing:-0.201px;transform:scaleX(0.952);transform-origin:0 0;">Efq_Areas_1 -</span><span class="t" id="mi6" style="left:599.8px;top:196.7px;font-size:11.5px;color:#464b62;font-weight:normal;letter-spacing:-0.081px;">especificar áreas diversas, por pontos</span><svg style="left:499px;top:216px;" width="16" height="16" viewBox="0 0 16 16" ><path d="M2.5,4.5 H13.5 V9 H9.5 V12.5 H2.5 Z" fill="#b9eef0" stroke="#101010" stroke-width="1.3"/></svg><span class="t" id="mi7a" style="left:525px;top:218.7px;font-size:11.5px;color:#464b62;font-weight:normal;letter-spacing:-0.201px;transform:scaleX(0.952);transform-origin:0 0;">Efq_Areas_2 -</span><span class="t" id="mi7" style="left:599.8px;top:218.7px;font-size:11.5px;color:#464b62;font-weight:normal;letter-spacing:-0.093px;">especificar áreas diversas, polilinhas existentes</span><svg style="left:499px;top:238px;" width="16" height="16" viewBox="0 0 16 16" ><path d="M3.5,0 V16 M12.5,0 V3 M0,3.5 H16 M0,13.5 H5 M12,13.5 H16 M13.500,12 V16" stroke="#2a3fa0" stroke-width="1" fill="none"/><path d="M4,6 l7,7 M4,9 l4,4 M5,4 l6,6 M8,4 l4,4 M11,4 l2,2" stroke="#5b7a70" stroke-width="0.9" fill="none"/><path d="M7,14.8 L8,11.5 L13.2,6.3 L15.4,8.5 L10.2,13.7 Z" fill="#f3b32a" stroke="#9a6a10" stroke-width="0.5"/><path d="M13.2,6.3 L14.2,5.3 L16,7.5 L15.4,8.5 Z" fill="#c8732a"/><path d="M7,14.8 L8,11.5 L10.2,13.7 Z" fill="#f1e3c8" stroke="#7a6a50" stroke-width="0.4"/><path d="M7,14.8 l0.5,-1.4 l0.9,0.9 Z" fill="#333"/></svg><span class="t" id="mi8a" style="left:525px;top:240.7px;font-size:11.5px;color:#464b62;font-weight:normal;letter-spacing:-0.201px;transform:scaleX(0.9565);transform-origin:0 0;">Efq_LAreas -</span><span class="t" id="mi8" style="left:594.2px;top:240.7px;font-size:11.5px;color:#464b62;font-weight:normal;letter-spacing:-0.138px;">exportar dados de áreas diversas</span><div class="ms" style="top:260px;"></div><svg style="left:499px;top:268px;" width="16" height="16" viewBox="0 0 16 16" ><path d="M1,1.5 H15" stroke="#e8205a" stroke-width="1.2"/><path d="M1,4.5 H15 M2.5,4.5 V15" stroke="#1a237e" stroke-width="1.3" fill="none"/><path d="M5,8.5 H15 M5.5,8.5 V15" stroke="#d81b60" stroke-width="1.2" fill="none"/><path d="M7,15 A4,4 0 0 1 15,15" fill="none" stroke="#1a237e" stroke-width="1.3"/></svg><span class="t" id="mi9a" style="left:525px;top:270.7px;font-size:11.5px;color:#464b62;font-weight:normal;letter-spacing:-0.350px;">Efq_Linear_I -</span><span class="t" id="mi9" style="left:599.8px;top:270.7px;font-size:11.5px;color:#464b62;font-weight:normal;letter-spacing:-0.099px;">especificar elementos lineares existentes</span><svg style="left:499px;top:290px;" width="16" height="16" viewBox="0 0 16 16" ><path d="M2,4.5 H14 M2,8.5 H14 M2,12.5 H14" stroke="#101010" stroke-width="1.3"/><circle cx="1.5" cy="4.5" r="1" fill="#39c0c0" stroke="#c02020" stroke-width="0.6"/><circle cx="1.5" cy="8.5" r="1" fill="#39c0c0" stroke="#c02020" stroke-width="0.6"/><circle cx="1.5" cy="12.5" r="1" fill="#39c0c0" stroke="#c02020" stroke-width="0.6"/><circle cx="14.5" cy="4.5" r="1" fill="#39c0c0" stroke="#c02020" stroke-width="0.6"/><circle cx="14.5" cy="8.5" r="1" fill="#39c0c0" stroke="#c02020" stroke-width="0.6"/><circle cx="14.5" cy="12.5" r="1" fill="#39c0c0" stroke="#c02020" stroke-width="0.6"/></svg><span class="t" id="mi10a" style="left:525px;top:292.7px;font-size:11.5px;color:#464b62;font-weight:normal;letter-spacing:-0.200px;transform:scaleX(0.9592);transform-origin:0 0;">Efq_Linear_P -</span><span class="t" id="mi10" style="left:603px;top:292.7px;font-size:11.5px;color:#464b62;font-weight:normal;letter-spacing:0.011px;">especificar elementos lineares por pontos</span><svg style="left:499px;top:312px;" width="16" height="16" viewBox="0 0 16 16" ><path d="M3.5,0 V16 M12.5,0 V3 M0,3.5 H16 M0,13.5 H5 M12,13.5 H16 M13.500,12 V16" stroke="#333" stroke-width="1" fill="none"/><path d="M4,6 l7,7 M4,9 l4,4 M5,4 l6,6 M8,4 l4,4 M11,4 l2,2" stroke="#5b7a70" stroke-width="0.9" fill="none"/><path d="M7,14.8 L8,11.5 L13.2,6.3 L15.4,8.5 L10.2,13.7 Z" fill="#f3b32a" stroke="#9a6a10" stroke-width="0.5"/><path d="M13.2,6.3 L14.2,5.3 L16,7.5 L15.4,8.5 Z" fill="#c8732a"/><path d="M7,14.8 L8,11.5 L10.2,13.7 Z" fill="#f1e3c8" stroke="#7a6a50" stroke-width="0.4"/><path d="M7,14.8 l0.5,-1.4 l0.9,0.9 Z" fill="#333"/></svg><span class="t" id="mi11a" style="left:525px;top:314.7px;font-size:11.5px;color:#464b62;font-weight:normal;letter-spacing:-0.199px;transform:scaleX(0.9458);transform-origin:0 0;">Efq_Linear_T -</span><span class="t" id="mi11" style="left:601.4px;top:314.7px;font-size:11.5px;color:#464b62;font-weight:normal;letter-spacing:-0.004px;">exportar dados de elementos lineares</span><div class="ms" style="top:334px;"></div><svg style="left:499px;top:342px;" width="16" height="16" viewBox="0 0 16 16" ><path d="M1.500,0 V16 M4.500,0 V16 M7.500,0 V16 M10.500,0 V16 M13.500,0 V16 M0,2.500 H16 M0,5.500 H16 M0,8.500 H16 M0,11.500 H16 M0,14.500 H16" stroke="#2a2a2a" stroke-width="1.100" fill="none"/><path d="M4.800,5.800 H12.600 L8.700,9.600 Z" fill="#e8306a"/></svg><span class="t" id="mi12a" style="left:525px;top:344.7px;font-size:11.5px;color:#464b62;font-weight:normal;letter-spacing:-0.161px;">Efq_Engrad -</span><span class="t" id="mi12" style="left:594.8px;top:344.7px;font-size:11.5px;color:#464b62;font-weight:normal;letter-spacing:0.020px;">especificar engradamento de telhados</span><svg style="left:499px;top:364px;" width="16" height="16" viewBox="0 0 16 16" ><path d="M3.5,0 V16 M12.5,0 V3 M0,3.5 H16 M0,13.5 H5 M12,13.5 H16 M13.500,12 V16" stroke="#333" stroke-width="1" fill="none"/><path d="M4,6 l7,7 M4,9 l4,4 M5,4 l6,6 M8,4 l4,4 M11,4 l2,2" stroke="#5b7a70" stroke-width="0.9" fill="none"/><path d="M7,14.8 L8,11.5 L13.2,6.3 L15.4,8.5 L10.2,13.7 Z" fill="#f3b32a" stroke="#9a6a10" stroke-width="0.5"/><path d="M13.2,6.3 L14.2,5.3 L16,7.5 L15.4,8.5 Z" fill="#c8732a"/><path d="M7,14.8 L8,11.5 L10.2,13.7 Z" fill="#f1e3c8" stroke="#7a6a50" stroke-width="0.4"/><path d="M7,14.8 l0.5,-1.4 l0.9,0.9 Z" fill="#333"/></svg><span class="t" id="mi13a" style="left:525px;top:366.7px;font-size:11.5px;color:#464b62;font-weight:normal;letter-spacing:-0.158px;">Efq_Lengrad -</span><span class="t" id="mi13" style="left:599.8px;top:366.7px;font-size:11.5px;color:#464b62;font-weight:normal;letter-spacing:0.062px;">gerar tabela de engradamento de telhados</span><svg style="left:499px;top:386px;" width="16" height="16" viewBox="0 0 16 16" ><path d="M2,0.500 V15.500 M6,0.500 V15.500 M10,0.500 V15.500 M14,0.500 V15.500" stroke="#9a5a28" stroke-width="2.700"/><path d="M2,0.500 V15.500 M6,0.500 V15.500 M10,0.500 V15.500 M14,0.500 V15.500" stroke="#b87a40" stroke-width="1"/><path d="M0,4.5 H16 M0,11.5 H16" stroke="#5a3018" stroke-width="1"/></svg><span class="t" id="mi14a" style="left:525px;top:388.7px;font-size:11.5px;color:#464b62;font-weight:normal;letter-spacing:-0.257px;">Efq_Telhas -</span><span class="t" id="mi14" style="left:589.9px;top:388.7px;font-size:11.5px;color:#464b62;font-weight:normal;letter-spacing:-0.115px;">especificar telhas</span><svg style="left:499px;top:408px;" width="16" height="16" viewBox="0 0 16 16" ><rect x="1.500" y="1.5" width="13" height="13" fill="#fff" stroke="#5a2a20" stroke-width="1.2"/><path d="M1.5,5.5 H14.5 M1.5,9.500 H14.5 M8.500,1.5 V14.5" stroke="#5a2a20" stroke-width="1.1"/></svg><span class="t" id="mi15a" style="left:525px;top:410.7px;font-size:11.5px;color:#464b62;font-weight:normal;letter-spacing:-0.198px;">Efq_Ltelhas -</span><span class="t" id="mi15" style="left:594.2px;top:410.7px;font-size:11.5px;color:#464b62;font-weight:normal;letter-spacing:-0.041px;">gerar tabela de telhas</span><div class="ms" style="top:430px;"></div><svg style="left:499px;top:438px;" width="16" height="16" viewBox="0 0 16 16" ><rect x="1.5" y="2.5" width="13" height="12" fill="#f2f8f4" stroke="#0c3a30" stroke-width="1.2"/><text x="8" y="12.600" font-family="Liberation Sans, sans-serif" font-weight="bold" font-size="11" text-anchor="middle" fill="#0c3a30" textLength="9" lengthAdjust="spacingAndGlyphs">N</text></svg><span class="t" id="mi16a" style="left:525px;top:440.7px;font-size:11.5px;color:#464b62;font-weight:normal;letter-spacing:-0.166px;">Efq_Bloco -</span><span class="t" id="mi16" style="left:589.9px;top:440.7px;font-size:11.5px;color:#464b62;font-weight:normal;letter-spacing:-0.037px;">conta as inserções de um bloco selecionado</span><svg style="left:499px;top:460px;" width="16" height="16" viewBox="0 0 16 16" ><path d="M3.5,0 V16 M12.5,0 V3 M0,3.5 H16 M0,13.5 H5 M12,13.5 H16 M13.500,12 V16" stroke="#333" stroke-width="1" fill="none"/><path d="M4,6 l7,7 M4,9 l4,4 M5,4 l6,6 M8,4 l4,4 M11,4 l2,2" stroke="#5b7a70" stroke-width="0.9" fill="none"/><path d="M7,14.8 L8,11.5 L13.2,6.3 L15.4,8.5 L10.2,13.7 Z" fill="#f3b32a" stroke="#9a6a10" stroke-width="0.5"/><path d="M13.2,6.3 L14.2,5.3 L16,7.5 L15.4,8.5 Z" fill="#c8732a"/><path d="M7,14.8 L8,11.5 L10.2,13.7 Z" fill="#f1e3c8" stroke="#7a6a50" stroke-width="0.4"/><path d="M7,14.8 l0.5,-1.4 l0.9,0.9 Z" fill="#333"/></svg><span class="t" id="mi17a" style="left:525px;top:462.7px;font-size:11.5px;color:#464b62;font-weight:normal;letter-spacing:-0.228px;">Efq_Blocos -</span><span class="t" id="mi17" style="left:594.8px;top:462.7px;font-size:11.5px;color:#464b62;font-weight:normal;letter-spacing:-0.124px;">contagem de blocos para Excel</span><div class="ms" style="top:482px;"></div><svg style="left:499px;top:490px;" width="16" height="16" viewBox="0 0 16 16" ><path d="M3.5,4.5 H12.5 L15,8 L12.500,11.5 H3.5 L1,8 Z" fill="#1c3fb0" stroke="#0a1a70" stroke-width="1"/><rect x="3.5" y="6" width="9" height="4" fill="url(#gcap)"/></svg><span class="t" id="mi18a" style="left:525px;top:492.7px;font-size:11.5px;color:#464b62;font-weight:normal;letter-spacing:-0.085px;">Efq_Objetos -</span><span class="t" id="mi18" style="left:601.4px;top:492.7px;font-size:11.5px;color:#464b62;font-weight:normal;letter-spacing:0.122px;">vincula uma entidade a um objeto qualquer</span><svg style="left:499px;top:512px;" width="16" height="16" viewBox="0 0 16 16" ><rect x="1.5" y="1.5" width="13" height="13" fill="#fff" stroke="#1a2030" stroke-width="1.2"/><path d="M1.500,5 H14.5 M1.5,8.2 H14.5 M1.5,11.400 H14.5 M9.500,1.5 V14.5" stroke="#1a2030" stroke-width="1.1"/></svg><span class="t" id="mi19a" style="left:525px;top:514.7px;font-size:11.5px;color:#464b62;font-weight:normal;letter-spacing:-0.139px;">Efq_LObjetos -</span><span class="t" id="mi19" style="left:607px;top:514.7px;font-size:11.5px;color:#464b62;font-weight:normal;letter-spacing:0.043px;">gerar tabela de objetos vinculados</span><div class="ms" style="top:534px;"></div><svg style="left:499px;top:542px;" width="16" height="16" viewBox="0 0 16 16" ><rect x="1.5" y="1.5" width="13" height="13" fill="url(#gsq)" stroke="#222" stroke-width="1.1"/><path d="M3.5,3.5 l2,2 M5.5,3.5 l-2,2" stroke="#e8f6ff" stroke-width="0.7"/></svg><span class="t" id="mi20a" style="left:525px;top:544.7px;font-size:11.5px;color:#464b62;font-weight:normal;letter-spacing:-0.089px;">Efq_Vidros -</span><span class="t" id="mi20" style="left:594.2px;top:544.7px;font-size:11.5px;color:#464b62;font-weight:normal;letter-spacing:-0.138px;">especificar vidros</span><svg style="left:499px;top:564px;" width="16" height="16" viewBox="0 0 16 16" ><rect x="1.5" y="1.5" width="13" height="13" fill="#fff" stroke="#1a2030" stroke-width="1.2"/><path d="M1.500,5 H14.5 M1.5,8.2 H14.5 M1.5,11.400 H14.5 M9.500,1.5 V14.5" stroke="#1a2030" stroke-width="1.1"/></svg><span class="t" id="mi21a" style="left:525px;top:566.7px;font-size:11.5px;color:#464b62;font-weight:normal;letter-spacing:-0.161px;">Efq_LVidros -</span><span class="t" id="mi21" style="left:598.8px;top:566.7px;font-size:11.5px;color:#464b62;font-weight:normal;letter-spacing:-0.026px;">gerar tabela de vidros</span><div class="ms" style="top:586px;"></div><svg style="left:499px;top:594px;" width="16" height="16" viewBox="0 0 16 16" ><rect x="4" y="4" width="8" height="8" fill="#c8281c" stroke="#5a5a5a" stroke-width="0.8"/><rect x="4.500" y="4.5" width="3.5" height="3.5" fill="#e8604a"/><rect x="8" y="8" width="3.500" height="3.5" fill="#e8604a"/></svg><span class="t" id="mi22a" style="left:525px;top:596.7px;font-size:11.5px;color:#464b62;font-weight:normal;letter-spacing:-0.267px;">Efq_BlkID -</span><span class="t" id="mi22" style="left:587.6px;top:596.7px;font-size:11.5px;color:#464b62;font-weight:normal;letter-spacing:0.056px;">inserir bloco especificador</span><svg style="left:499px;top:616px;" width="16" height="16" viewBox="0 0 16 16" ><rect x="1.5" y="0.5" width="13" height="15" fill="#fff" stroke="#222" stroke-width="1.1"/><path d="M1.5,3.5 H14.500 M1.5,6.5 H14.5 M1.5,9.5 H14.5 M1.500,12.5 H14.5 M6,0.5 V15.5 M10.500,0.500 V15.5" stroke="#222" stroke-width="1"/></svg><span class="t" id="mi23a" style="left:525px;top:618.7px;font-size:11.5px;color:#464b62;font-weight:normal;letter-spacing:-0.343px;">Efq_RBlkID -</span><span class="t" id="mi23" style="left:594.8px;top:618.7px;font-size:11.5px;color:#464b62;font-weight:normal;letter-spacing:0.107px;">gerar relatório de objetos inseridos, .txt</span><svg style="left:499px;top:638px;" width="16" height="16" viewBox="0 0 16 16" ><rect x="1.5" y="1.5" width="13" height="13" fill="#eef4f8" stroke="#333" stroke-width="1"/><path d="M1.5,4 H14.5 M1.5,6.500 H14.5 M1.5,9 H14.5 M1.5,11.500 H14.5 M9.5,1.5 V14.5" stroke="#333" stroke-width="1"/></svg><span class="t" id="mi24a" style="left:525px;top:640.7px;font-size:11.5px;color:#464b62;font-weight:normal;letter-spacing:-0.315px;">Efq_LBlkID -</span><span class="t" id="mi24" style="left:593.2px;top:640.7px;font-size:11.5px;color:#464b62;font-weight:normal;letter-spacing:-0.178px;">gerar tabela de especificações de marcadores, Excel</span><div class="ms" style="top:660px;"></div><svg style="left:499px;top:668px;" width="16" height="16" viewBox="0 0 16 16" ><rect x="1.500" y="1.500" width="13" height="13" fill="#f4f0e8" stroke="#222" stroke-width="1.2"/><rect x="3.5" y="3.500" width="3.5" height="3.5" fill="#c9b8e8" stroke="#222" stroke-width="0.9"/><rect x="9" y="3.5" width="3.500" height="3.5" fill="#c9b8e8" stroke="#222" stroke-width="0.9"/><rect x="3.5" y="10" width="9" height="2.500" fill="#e8d8b0" stroke="#222" stroke-width="0.9"/></svg><span class="t" id="mi25a" style="left:525px;top:670.7px;font-size:11.5px;color:#464b62;font-weight:normal;letter-spacing:-0.384px;">Efq_Kits -</span><span class="t" id="mi25" style="left:578.5px;top:670.7px;font-size:11.5px;color:#464b62;font-weight:normal;letter-spacing:0.106px;">kits de objetos</span><svg style="left:499px;top:690px;" width="16" height="16" viewBox="0 0 16 16" ><rect x="1.5" y="2.500" width="13" height="12" fill="#bfeee0" stroke="#222" stroke-width="1.1"/><path d="M1.5,5.5 H14.5 M1.5,8.500 H14.5 M1.5,11.5 H14.500" stroke="#222" stroke-width="1.2"/></svg><span class="t" id="mi26a" style="left:525px;top:692.7px;font-size:11.5px;color:#464b62;font-weight:normal;letter-spacing:-0.201px;transform:scaleX(0.9567);transform-origin:0 0;">Efq_LKits -</span><span class="t" id="mi26" style="left:584px;top:692.7px;font-size:11.5px;color:#464b62;font-weight:normal;letter-spacing:0.015px;">gerar relatório de kits existentes</span><div class="ms" style="top:712px;"></div><svg style="left:499px;top:720px;" width="16" height="16" viewBox="0 0 16 16" ><circle cx="6.5" cy="6.5" r="5" fill="#dff1fb" stroke="#8a8f98" stroke-width="1.6"/><path d="M4,5.500 A3,3 0 0 1 7,3.500" stroke="#fff" stroke-width="1.2" fill="none"/><path d="M10.2,10.2 L15,15" stroke="#8a5a2a" stroke-width="2.6" stroke-linecap="round"/></svg><span class="t" id="mi27a" style="left:525px;top:722.7px;font-size:11.5px;color:#464b62;font-weight:normal;letter-spacing:-0.166px;">Efq_Verificar -</span><span class="t" id="mi27" style="left:602px;top:722.7px;font-size:11.5px;color:#464b62;font-weight:normal;letter-spacing:-0.049px;">verificar entidades cadastradas</span><div class="ms" style="top:742px;"></div><svg style="left:499px;top:750px;" width="16" height="16" viewBox="0 0 16 16" ><text x="8" y="14" font-family="Liberation Serif, serif" font-weight="bold" font-size="17" text-anchor="middle" fill="#151515">T</text></svg><span class="t" id="mi28a" style="left:525px;top:752.7px;font-size:11.5px;color:#464b62;font-weight:normal;letter-spacing:-0.200px;">Efq_Alfa -</span><span class="t" id="mi28" style="left:580.8px;top:752.7px;font-size:11.5px;color:#464b62;font-weight:normal;letter-spacing:0.060px;">biblioteca de textos</span><div class="ms" style="top:772px;"></div><svg style="left:499px;top:780px;" width="16" height="16" viewBox="0 0 16 16" ><rect x="0.5" y="5.500" width="15" height="6" fill="#e8ecf8" stroke="#1a1a6a" stroke-width="1"/><path d="M2.500,5.5 V8.500 M4.5,5.500 V8.5 M6.500,5.5 V8.5 M8.5,5.5 V8.500 M10.500,5.500 V8.5 M12.500,5.5 V8.5" stroke="#1a1a6a" stroke-width="1"/></svg><span class="t" id="mi29a" style="left:525px;top:782.7px;font-size:11.5px;color:#464b62;font-weight:normal;letter-spacing:-0.139px;">Efq_Units -</span><span class="t" id="mi29" style="left:587.6px;top:782.7px;font-size:11.5px;color:#464b62;font-weight:normal;letter-spacing:0.103px;">informar unidade métrica utilizada</span><svg style="left:499px;top:802px;" width="16" height="16" viewBox="0 0 16 16" ><path d="M15.500,0.5 L16,3 L8,12.500 L5,10.500 Z" fill="#8a8a8a" stroke="#444" stroke-width="0.6"/><path d="M5,10.5 L8,12.5 L3,15 L1,15.500 L2,13.500 Z" fill="#3a3a3a"/><path d="M11,4 L13.500,6" stroke="#d0d0d0" stroke-width="1"/></svg><span class="t" id="mi30a" style="left:525px;top:804.7px;font-size:11.5px;color:#464b62;font-weight:normal;letter-spacing:0.021px;">Efq_Configurar -</span><span class="t" id="mi30" style="left:616.8px;top:804.7px;font-size:11.5px;color:#464b62;font-weight:normal;letter-spacing:0.015px;">editar arquivos de dados para as rotinas</span><svg style="left:499px;top:824px;" width="16" height="16" viewBox="0 0 16 16" ><rect x="1.500" y="1.5" width="13" height="13" fill="#fff" stroke="#222" stroke-width="1.1"/><text x="8" y="12.500" font-family="Liberation Sans, sans-serif" font-weight="bold" font-size="11.5" text-anchor="middle" fill="#222">?</text></svg><span class="t" id="mi31a" style="left:525px;top:826.7px;font-size:11.5px;color:#464b62;font-weight:normal;letter-spacing:-0.233px;">Efq_Help  -</span><span class="t" id="mi31" style="left:587.3px;top:826.7px;font-size:11.5px;color:#464b62;font-weight:normal;letter-spacing:0.113px;">ajuda do aplicativo</span><div class="ms" style="top:846px;"></div><div class="a" style="left:497px;top:851px;width:405px;height:22px;box-sizing:border-box;border:1px solid #e6d49a;border-radius:2px;background:linear-gradient(#fffdf2 0,#ffefb8 48%,#ffd248 52%,#ffe080 100%);"></div><span class="t" id="sobre" style="left:525px;top:856.6px;font-size:11.5px;color:#464b62;font-weight:normal;letter-spacing:-0.225px;">Sobre...</span><svg style="left:895px;top:858px;" width="5" height="8" viewBox="0 0 5 8" ><path d="M0,0 L4,3.500 L0,7 Z" fill="#3a4258"/></svg><div class="a" style="left:904px;top:846px;width:203px;height:92px;box-sizing:border-box;background:#fbfbfb;border:1px solid #d62810;"></div><div class="a" style="left:905px;top:847px;width:24px;height:68px;background:#e9edf6;border-right:1px solid #c0c0c0;"></div><div class="a" style="left:906px;top:915px;width:199px;height:20px;box-sizing:border-box;border:1px solid #e6d49a;border-radius:2px;background:linear-gradient(#fffdf2 0,#ffefb8 48%,#ffd248 52%,#ffe080 100%);"></div><span class="t" id="sub0" style="left:935px;top:853.6px;font-size:11.5px;color:#464b62;font-weight:normal;letter-spacing:0.090px;">Aplicativo desenvolvido por:</span><span class="t" id="sub1" style="left:935px;top:875.6px;font-size:11.5px;color:#464b62;font-weight:normal;letter-spacing:0.108px;">Eduardo Fernal, arquiteto</span><span class="t" id="sub2" style="left:935px;top:897.6px;font-size:11.5px;color:#464b62;font-weight:normal;letter-spacing:0.128px;">www.gr-acad.com.br</span><span class="t" id="sub3" style="left:935px;top:919.6px;font-size:11.5px;color:#464b62;font-weight:normal;letter-spacing:-0.364px;">Fone ( 0 xx 31 ) 3287.7173</span>
</body></html>
